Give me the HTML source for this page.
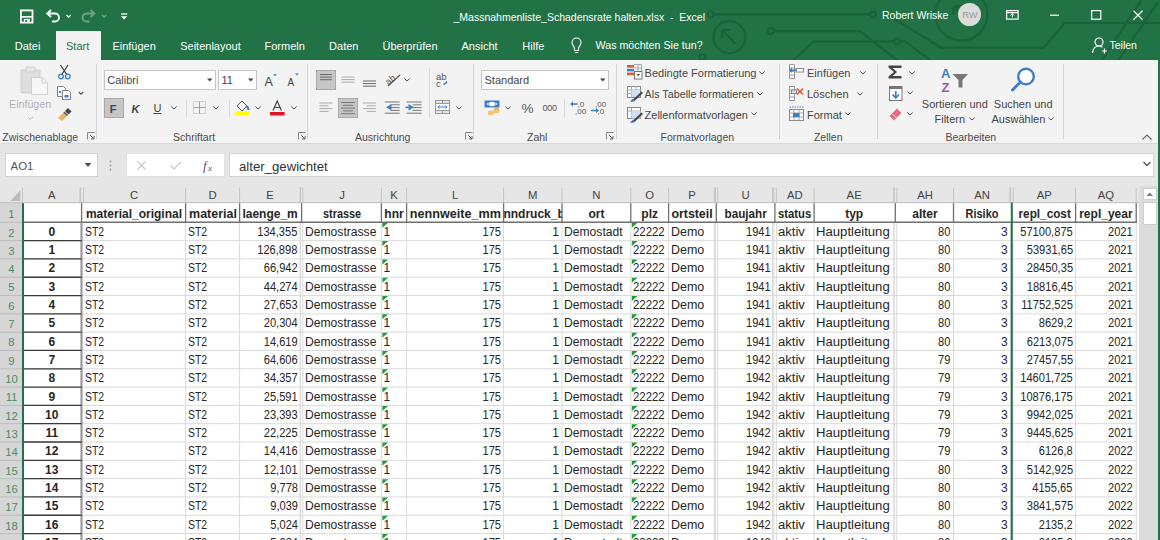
<!DOCTYPE html><html><head><meta charset="utf-8"><style>
*{margin:0;padding:0;box-sizing:border-box}
html,body{width:1160px;height:540px;overflow:hidden;background:#fff;font-family:"Liberation Sans",sans-serif}
.a{position:absolute}
.t{position:absolute;white-space:nowrap;line-height:1}
.ui{font-size:11px;color:#262626}
.cell{position:absolute;font-size:12px;color:#000;white-space:nowrap;line-height:18px;overflow:hidden}
.hl{position:absolute;background:#d4d4d4}
svg{position:absolute;overflow:visible}
</style></head><body>

<div class="a" style="left:0;top:0;width:1160px;height:59.5px;background:#217346"></div>
<svg class="a" style="left:0;top:0" width="1160" height="60" viewBox="0 0 1160 60">
<g fill="none" stroke="#1b633a" stroke-width="2.3">
<path d="M713.7 14.5 H870"/><circle cx="710.7" cy="14.5" r="3"/><circle cx="873" cy="14.5" r="3"/>
<circle cx="729.3" cy="37.2" r="16"/><path d="M735.5 43.5 L722.5 30.5 M722 30 V38 M722 30 H730" stroke-width="2.4"/>
<circle cx="770.7" cy="31" r="3"/><path d="M773.7 31 H859.7 L897 60"/>
<path d="M793.5 60 L814 41.4 H894"/><circle cx="897" cy="41.4" r="3"/><path d="M900 41.4 H905 L930 60"/>
<path d="M885 13 L940.7 47.6 H1044 L1064.8 22.8 H1160"/>
<circle cx="961.4" cy="14.5" r="26"/><path d="M968 21 L954 7 M953.5 6.5 V15 M953.5 6.5 H962" stroke-width="2.4"/>
<path d="M1102 60 L1141.4 0 M1118.6 60 L1158 2"/>
<circle cx="702.4" cy="57" r="3"/>
</g></svg>
<svg style="left:0;top:0" width="140" height="32">
<g fill="none" stroke="#fff" stroke-width="1.6">
<rect x="20.9" y="10.4" width="11.6" height="12.2" stroke-width="1.8"/>
<path d="M21 16.9 H32.5" stroke-width="1.6"/><rect x="23.8" y="18.9" width="6" height="3" fill="#fff" stroke="none"/><rect x="25.3" y="19.8" width="1.6" height="2.2" fill="#217346" stroke="none"/>
<path d="M48 13.5 H55 A4 4 0 0 1 55 21.5 H52" stroke-width="1.8"/><path d="M51 10 L47.2 13.5 L51 17" stroke-width="1.8"/>
<path d="M66.5 15 L68.6 17.2 L70.7 15" stroke-width="1.2"/>
<g opacity="0.35"><path d="M93.5 13.5 H86.5 A4 4 0 0 0 86.5 21.5 H89.5" stroke-width="1.8"/><path d="M90.5 10 L94.3 13.5 L90.5 17" stroke-width="1.8"/>
<path d="M102 15 L104.1 17.2 L106.2 15" stroke-width="1.2"/></g>
<path d="M121 14 H127.2" stroke-width="1.3"/>
</g><path d="M121 16.3 H127.2 L124.1 19.6 Z" fill="#fff"/>
</svg>
<div class="t" style="left:453.5px;top:11.8px;font-size:10.5px;color:#fff">_Massnahmenliste_Schadensrate halten.xlsx&nbsp; -&nbsp; Excel</div>
<div class="t" style="left:882px;top:10px;font-size:10.5px;color:#fff">Robert Wriske</div>
<div class="a" style="left:958.3px;top:3.1px;width:22.8px;height:22.8px;border-radius:50%;background:#dcdcdc"></div>
<div class="t" style="left:958.5px;top:10px;width:22.8px;text-align:center;font-size:9.5px;color:#9a9a9a;letter-spacing:-0.3px">RW</div>
<svg style="left:1000px;top:0" width="160" height="32"><g fill="none" stroke="#fff" stroke-width="1.2">
<rect x="6.6" y="10.6" width="11.5" height="8.5"/><path d="M6.6 12.6 H18.1"/>
<path d="M50 15.2 H59"/>
<rect x="91.6" y="10.6" width="9.2" height="8.6"/>
<path d="M133.5 10.8 L142.5 19.6 M142.5 10.8 L133.5 19.6"/>
</g><path d="M12.3 17.5 V13.8 M10.5 15.5 L12.3 13.6 L14.1 15.5" stroke="#fff" fill="none" stroke-width="1"/></svg>
<div class="a" style="left:56px;top:31.3px;width:44.8px;height:28.5px;background:#f3f3f3"></div>
<div class="t" style="left:14.7px;top:40.5px;font-size:11px;color:#fff">Datei</div>
<div class="t" style="left:66.0px;top:40.5px;font-size:11px;color:#217346">Start</div>
<div class="t" style="left:112.4px;top:40.5px;font-size:11px;color:#fff">Einfügen</div>
<div class="t" style="left:180.2px;top:40.5px;font-size:11px;color:#fff">Seitenlayout</div>
<div class="t" style="left:264.5px;top:40.5px;font-size:11px;color:#fff">Formeln</div>
<div class="t" style="left:329.1px;top:40.5px;font-size:11px;color:#fff">Daten</div>
<div class="t" style="left:382.5px;top:40.5px;font-size:11px;color:#fff">Überprüfen</div>
<div class="t" style="left:461.5px;top:40.5px;font-size:11px;color:#fff">Ansicht</div>
<div class="t" style="left:522.3px;top:40.5px;font-size:11px;color:#fff">Hilfe</div>
<svg style="left:568px;top:36px" width="20" height="20"><path d="M6.5 14.5 V12.5 C6.5 10.5 4 9.5 4 6.5 A4.5 4.5 0 0 1 13 6.5 C13 9.5 10.5 10.5 10.5 12.5 V14.5 Z M7 16.5 H10" fill="none" stroke="#fff" stroke-width="1.1"/></svg>
<div class="t" style="left:595.5px;top:40px;font-size:10.7px;color:#fff">Was möchten Sie tun?</div>
<svg style="left:1088px;top:34px" width="24" height="24"><g fill="none" stroke="#fff" stroke-width="1.2"><circle cx="11" cy="8" r="4"/><path d="M4.5 19 C5 14 8 12 11 12 C12.5 12 13.5 12.5 14.5 13.2"/><path d="M14 17 H19 M16.5 14.5 V19.5"/></g></svg>
<div class="t" style="left:1109.5px;top:40px;font-size:10.5px;color:#fff">Teilen</div>
<div class="a" style="left:0;top:59.5px;width:1160px;height:83.5px;background:#f3f3f3"></div>
<div class="a" style="left:0;top:143px;width:1160px;height:43px;background:#e6e6e6"></div>
<div class="a" style="left:0;top:142.6px;width:1158px;height:1.2px;background:#d9d9d9"></div>
<div class="a" style="left:1158px;top:59.5px;width:2px;height:481px;background:#217346"></div>
<div class="a" style="left:95.7px;top:64px;width:1px;height:75px;background:#d5d5d5"></div>
<div class="a" style="left:307.2px;top:64px;width:1px;height:75px;background:#d5d5d5"></div>
<div class="a" style="left:473.3px;top:64px;width:1px;height:75px;background:#d5d5d5"></div>
<div class="a" style="left:616.1px;top:64px;width:1px;height:75px;background:#d5d5d5"></div>
<div class="a" style="left:778.6px;top:64px;width:1px;height:75px;background:#d5d5d5"></div>
<div class="a" style="left:876.9px;top:64px;width:1px;height:75px;background:#d5d5d5"></div>
<div class="a" style="left:1063.3px;top:64px;width:1px;height:75px;background:#d5d5d5"></div>
<div class="t" style="left:2.3px;top:131.5px;font-size:10.5px;color:#4a4a4a">Zwischenablage</div>
<div class="t" style="left:173.1px;top:131.5px;font-size:10.5px;color:#4a4a4a">Schriftart</div>
<div class="t" style="left:355.0px;top:131.5px;font-size:10.5px;color:#4a4a4a">Ausrichtung</div>
<div class="t" style="left:527.0px;top:131.5px;font-size:10.5px;color:#4a4a4a">Zahl</div>
<div class="t" style="left:660.6px;top:131.5px;font-size:10.5px;color:#4a4a4a">Formatvorlagen</div>
<div class="t" style="left:813.9px;top:131.5px;font-size:10.5px;color:#4a4a4a">Zellen</div>
<div class="t" style="left:945.4px;top:131.5px;font-size:10.5px;color:#4a4a4a">Bearbeiten</div>
<svg style="left:18px;top:64px" width="34" height="34"><g>
<rect x="3" y="6" width="19" height="23" rx="1" fill="#dedede" stroke="#d0d0d0"/>
<rect x="8" y="3" width="9" height="5" rx="1" fill="#e8e8e8" stroke="#cfcfcf"/>
<path d="M13.5 13.5 H24 L29.5 19 V30.5 H13.5 Z" fill="#f7f7f7" stroke="#cfcfcf"/>
<path d="M24 13.5 V19 H29.5" fill="none" stroke="#cfcfcf"/>
</g></svg>
<div class="t" style="left:9px;top:99px;font-size:10.7px;color:#b3b3b3">Einfügen</div>
<svg style="left:26px;top:114.5px" width="10" height="8"><path d="M2 2 L4.5 4.5 L7 2" fill="none" stroke="#bdbdbd" stroke-width="1"/></svg>
<svg style="left:56px;top:63px" width="18" height="18"><g fill="none" stroke-width="1.3">
<path d="M4.5 2 L11 12 M12 2 L5.5 12" stroke="#444"/>
<circle cx="5" cy="13.5" r="2.3" stroke="#3d7fc6"/><circle cx="11.8" cy="13.5" r="2.3" stroke="#3d7fc6"/></g></svg>
<svg style="left:56px;top:85px" width="18" height="18"><g stroke="#808080" stroke-width="1">
<path d="M1.5 1.5 H7.5 L9.5 3.5 V11.5 H1.5 Z" fill="#fff"/>
<path d="M6.5 5.5 H12.5 L14.5 7.5 V14.5 H6.5 Z" fill="#fff"/></g>
<rect x="3" y="6" width="2" height="2" fill="#3d7fc6"/><rect x="8.5" y="10" width="4" height="2.5" fill="#3d7fc6"/></svg>
<svg style="left:77px;top:90px" width="10" height="8"><path d="M1.8 2 L4 4.2 L6.2 2" fill="none" stroke="#555" stroke-width="1.1"/></svg>
<svg style="left:56px;top:106px" width="18" height="16"><path d="M2 12 L8 6 L11.5 9.5 L6 15 Z" fill="#e7b75f"/><path d="M9 5 L12 2 L15.5 5.5 L12.5 8.5 Z" fill="#444"/><path d="M8 6 L11.5 9.5" stroke="#555" stroke-width="1.5"/></svg>
<svg style="left:86.5px;top:132px" width="9" height="9"><path d="M0.5 7.5 V0.5 H7.5" fill="none" stroke="#888" stroke-width="1"/><path d="M3 3 L7 7 M7 4 V7 H4" fill="none" stroke="#666" stroke-width="1"/></svg>
<svg style="left:297.5px;top:132px" width="9" height="9"><path d="M0.5 7.5 V0.5 H7.5" fill="none" stroke="#888" stroke-width="1"/><path d="M3 3 L7 7 M7 4 V7 H4" fill="none" stroke="#666" stroke-width="1"/></svg>
<svg style="left:464.5px;top:132px" width="9" height="9"><path d="M0.5 7.5 V0.5 H7.5" fill="none" stroke="#888" stroke-width="1"/><path d="M3 3 L7 7 M7 4 V7 H4" fill="none" stroke="#666" stroke-width="1"/></svg>
<svg style="left:605.5px;top:132px" width="9" height="9"><path d="M0.5 7.5 V0.5 H7.5" fill="none" stroke="#888" stroke-width="1"/><path d="M3 3 L7 7 M7 4 V7 H4" fill="none" stroke="#666" stroke-width="1"/></svg>
<div class="a" style="left:104.1px;top:70px;width:112px;height:20.2px;background:#fff;border:1px solid #c6c6c6"></div>
<div class="t" style="left:107.2px;top:75px;font-size:11px;color:#454545">Calibri</div>
<svg style="left:206px;top:76px" width="8" height="8"><path d="M1 2.5 H6.5 L3.75 5.5 Z" fill="#444"/></svg>
<div class="a" style="left:218.2px;top:70px;width:38.7px;height:20.2px;background:#fff;border:1px solid #c6c6c6"></div>
<div class="t" style="left:221.5px;top:75px;font-size:11px;color:#454545">11</div>
<svg style="left:246.5px;top:76px" width="8" height="8"><path d="M1 2.5 H6.5 L3.75 5.5 Z" fill="#444"/></svg>
<svg style="left:262px;top:72px" width="40" height="18"><text x="2.5" y="14" font-family="Liberation Sans" font-size="12.5" fill="#444">A</text><path d="M11 3.5 L13 1.5 L15 3.5 Z" fill="#3d7fc6"/>
<text x="25.5" y="14" font-family="Liberation Sans" font-size="10" fill="#444">A</text><path d="M33 1.5 L35 3.5 L37 1.5 Z" fill="#3d7fc6"/></svg>
<div class="a" style="left:104.1px;top:98px;width:19.8px;height:20.3px;background:#c6c6c6;border:1px solid #a9a9a9"></div>
<div class="t" style="left:109.8px;top:103.5px;font-size:11px;font-weight:bold;color:#444">F</div>
<div class="t" style="left:131.6px;top:103.5px;font-size:11px;font-weight:bold;font-style:italic;color:#444">K</div>
<div class="t" style="left:153.4px;top:102.5px;font-size:11px;color:#444;text-decoration:underline">U</div>
<svg style="left:170.2px;top:105px" width="8" height="6"><path d="M1.3 1.5 L4 4 L6.7 1.5" fill="none" stroke="#555" stroke-width="1"/></svg>
<div class="a" style="left:186px;top:100px;width:1px;height:17px;background:#d9d9d9"></div>
<svg style="left:193px;top:101px" width="14" height="14"><rect x="0.5" y="0.5" width="12" height="12" fill="none" stroke="#b0b0b0" stroke-dasharray="1 1"/><path d="M6.5 0.5 V12.5 M0.5 6.5 H12.5" stroke="#a0a0a0" stroke-width="1"/></svg>
<svg style="left:212.4px;top:105px" width="8" height="6"><path d="M1.3 1.5 L4 4 L6.7 1.5" fill="none" stroke="#555" stroke-width="1"/></svg>
<div class="a" style="left:228.5px;top:100px;width:1px;height:17px;background:#d9d9d9"></div>
<svg style="left:234px;top:98px" width="18" height="20"><path d="M3 8 L8 3 L13 8 L8 13 Z" fill="#fff" stroke="#555" stroke-width="1"/><path d="M12 8 C14 9 14.5 11 14.5 12" stroke="#3d7fc6" stroke-width="2" fill="none"/><rect x="0.8" y="13.5" width="14.5" height="3.6" fill="#ffff00"/></svg>
<svg style="left:254.39999999999998px;top:105px" width="8" height="6"><path d="M1.3 1.5 L4 4 L6.7 1.5" fill="none" stroke="#555" stroke-width="1"/></svg>
<svg style="left:269px;top:98px" width="18" height="20"><path d="M4 12.5 L8.2 3 L12.4 12.5 M5.6 9.5 H10.8" fill="none" stroke="#444" stroke-width="1.2"/><rect x="1" y="14" width="14.6" height="3.5" fill="#e81123"/></svg>
<svg style="left:289.7px;top:105px" width="8" height="6"><path d="M1.3 1.5 L4 4 L6.7 1.5" fill="none" stroke="#555" stroke-width="1"/></svg>
<div class="a" style="left:315.9px;top:69.5px;width:20px;height:20.8px;background:#c6c6c6;border:1px solid #a9a9a9"></div>
<div class="a" style="left:337.8px;top:97.7px;width:20.2px;height:20.4px;background:#c6c6c6;border:1px solid #a9a9a9"></div>
<svg style="left:0;top:0" width="1160" height="145"><rect x="320" y="74.0" width="12" height="1" fill="#666"/><rect x="320" y="76.6" width="12" height="1" fill="#666"/><rect x="320" y="79.2" width="12" height="1" fill="#666"/><rect x="341.5" y="76.5" width="13" height="1" fill="#aaa"/><rect x="341.5" y="79.1" width="13" height="1" fill="#aaa"/><rect x="341.5" y="81.7" width="13" height="1" fill="#aaa"/><rect x="363" y="80.5" width="13" height="1" fill="#666"/><rect x="363" y="83.1" width="13" height="1" fill="#666"/><rect x="363" y="85.7" width="13" height="1" fill="#666"/><rect x="319.5" y="102.5" width="13" height="1" fill="#aaa"/><rect x="319.5" y="105.3" width="9" height="1" fill="#aaa"/><rect x="319.5" y="108.1" width="13" height="1" fill="#aaa"/><rect x="319.5" y="110.9" width="9" height="1" fill="#aaa"/><rect x="341" y="102.0" width="14" height="1" fill="#777"/><rect x="343" y="104.8" width="10" height="1" fill="#777"/><rect x="341" y="107.6" width="14" height="1" fill="#777"/><rect x="343" y="110.4" width="10" height="1" fill="#777"/><rect x="341" y="113.2" width="14" height="1" fill="#777"/><rect x="362.9" y="102.5" width="13" height="1" fill="#aaa"/><rect x="366.9" y="105.3" width="9" height="1" fill="#aaa"/><rect x="362.9" y="108.1" width="13" height="1" fill="#aaa"/><rect x="366.9" y="110.9" width="9" height="1" fill="#aaa"/><rect x="384.7" y="101.5" width="15" height="1" fill="#777"/><rect x="390.7" y="104.3" width="9" height="1" fill="#777"/><rect x="390.7" y="107.1" width="9" height="1" fill="#777"/><rect x="390.7" y="109.9" width="9" height="1" fill="#777"/><rect x="384.7" y="112.7" width="15" height="1" fill="#777"/><rect x="406.6" y="101.5" width="15" height="1" fill="#777"/><rect x="412.6" y="104.3" width="9" height="1" fill="#777"/><rect x="412.6" y="107.1" width="9" height="1" fill="#777"/><rect x="412.6" y="109.9" width="9" height="1" fill="#777"/><rect x="406.6" y="112.7" width="15" height="1" fill="#777"/><path d="M386 107.3 L391.5 104 V110.5 Z M389 107.3 H390" fill="#3d7fc6"/><rect x="388" y="106.5" width="2.5" height="1.6" fill="#3d7fc6"/><path d="M414 107.3 L408.5 104 V110.5 Z" fill="#3d7fc6" transform="translate(0,0)"/><rect x="405.5" y="106.5" width="3" height="1.6" fill="#3d7fc6"/></svg>
<svg style="left:383px;top:70px" width="22" height="20"><text x="2" y="12" font-family="Liberation Sans" font-size="9" fill="#555" transform="rotate(-40 8 9)">ab</text><path d="M5 16 L17 5" stroke="#555" stroke-width="1.2"/></svg>
<svg style="left:403px;top:76.5px" width="8" height="6"><path d="M1.3 1.5 L4 4 L6.7 1.5" fill="none" stroke="#555" stroke-width="1"/></svg>
<div class="a" style="left:428.5px;top:68px;width:1px;height:50px;background:#d9d9d9"></div>
<svg style="left:434px;top:70px" width="20" height="20"><text x="2" y="9.5" font-family="Liberation Sans" font-size="9.5" fill="#555">ab</text><text x="2" y="16.5" font-family="Liberation Sans" font-size="9.5" fill="#555">c</text><path d="M9.5 14.5 L12 13 L13 11.5" stroke="#3d7fc6" stroke-width="1.5" fill="none"/></svg>
<svg style="left:434px;top:99px" width="18" height="17"><rect x="1.5" y="1.5" width="14" height="13" fill="#fff" stroke="#999"/><rect x="1.5" y="1.5" width="14" height="3" fill="#e4e4e4" stroke="#999"/><rect x="1.5" y="11.5" width="14" height="3" fill="#e4e4e4" stroke="#999"/><path d="M8.5 1.5 V4.5 M8.5 11.5 V14.5" stroke="#999"/><path d="M4 8 H13" stroke="#3d7fc6" stroke-width="1"/><path d="M4 8 L5.5 6.5 M4 8 L5.5 9.5 M13 8 L11.5 6.5 M13 8 L11.5 9.5" stroke="#3d7fc6" stroke-width="1"/></svg>
<svg style="left:454.7px;top:105px" width="8" height="6"><path d="M1.3 1.5 L4 4 L6.7 1.5" fill="none" stroke="#555" stroke-width="1"/></svg>
<div class="a" style="left:481.3px;top:70.2px;width:128px;height:20px;background:#fff;border:1px solid #c6c6c6"></div>
<div class="t" style="left:484.5px;top:75px;font-size:11px;color:#454545">Standard</div>
<svg style="left:599px;top:76px" width="8" height="8"><path d="M1 2.5 H6.5 L3.75 5.5 Z" fill="#444"/></svg>
<svg style="left:483px;top:99px" width="20" height="19"><rect x="1.5" y="1.5" width="15" height="7" fill="#3d7fc6"/><ellipse cx="9" cy="5" rx="3" ry="2.3" fill="#fff"/><path d="M3.5 5 L5.5 3.5 V6.5 Z M14.5 5 L12.5 3.5 V6.5 Z" fill="#fff"/>
<ellipse cx="8" cy="13" rx="3" ry="1.5" fill="#f0c27a"/><rect x="5" y="13" width="6" height="3" fill="#f0c27a"/><ellipse cx="13.5" cy="10.5" rx="2.8" ry="1.4" fill="#e9a94e"/><rect x="10.7" y="10.5" width="5.6" height="3.5" fill="#f0c27a"/></svg>
<svg style="left:504.3px;top:104.5px" width="8" height="6"><path d="M1.3 1.5 L4 4 L6.7 1.5" fill="none" stroke="#555" stroke-width="1"/></svg>
<div class="t" style="left:521.5px;top:102px;font-size:13.5px;color:#555">%</div>
<div class="t" style="left:542.4px;top:104px;font-size:9px;color:#555;letter-spacing:-0.2px">000</div>
<div class="a" style="left:563.5px;top:98.6px;width:1px;height:19px;background:#d9d9d9"></div>
<svg style="left:569px;top:100px" width="40" height="16"><g font-family="Liberation Sans" font-size="8" fill="#555"><text x="8.5" y="7">,0</text><text x="6" y="13.5">,00</text><text x="26" y="7">,00</text><text x="28.5" y="13.5">,0</text></g>
<path d="M1 4 L4 1.5 V6.5 Z" fill="#3d7fc6"/><rect x="3.5" y="3.3" width="5" height="1.5" fill="#3d7fc6"/>
<path d="M30 10.5 L27 8 V13 Z" fill="#3d7fc6"/><rect x="22" y="9.8" width="5.5" height="1.5" fill="#3d7fc6"/></svg>
<svg style="left:626px;top:63px" width="18" height="18"><rect x="1" y="2" width="7" height="2.6" fill="#e5563b"/><rect x="1" y="5.8" width="7" height="2.6" fill="#3d7fc6"/><rect x="1" y="9.6" width="7" height="2.6" fill="#e5563b"/>
<path d="M8 1.5 H15.5 M8 5 H15.5 M8 8.5 H9 M12 1.5 V8.5 M15.5 1.5 V8.5" stroke="#aaa" stroke-width="1" fill="none"/>
<rect x="8.5" y="8.5" width="7.5" height="7.5" fill="#fff" stroke="#777"/><path d="M10.5 11 H14 L12.25 13.5 Z" fill="#555"/></svg>
<svg style="left:626px;top:85px" width="18" height="18"><rect x="1.5" y="1.5" width="13" height="11" fill="#fff" stroke="#888"/><path d="M1.5 5 H14.5 M1.5 8.5 H14.5 M5.5 1.5 V12.5 M10 1.5 V12.5" stroke="#aaa"/><rect x="5.5" y="5" width="8" height="7" fill="#cfe0f4"/>
<path d="M6 15.5 L15.5 6.5 L17 8 L8 16.5 Z" fill="#444"/><path d="M4 16.5 L7 13.5 L9 15.5 L6 17 Z" fill="#3d7fc6"/></svg>
<svg style="left:626px;top:105.5px" width="18" height="18"><rect x="1.5" y="1.5" width="13" height="11" fill="#fff" stroke="#888"/><path d="M1.5 5 H14.5 M5.5 1.5 V12.5" stroke="#aaa"/><rect x="5.5" y="5" width="9" height="7.5" fill="#cfe0f4"/>
<path d="M6 15.5 L15.5 6.5 L17 8 L8 16.5 Z" fill="#444"/><path d="M4 16.5 L7 13.5 L9 15.5 L6 17 Z" fill="#3d7fc6"/></svg>
<div class="t" style="left:644.6px;top:67.5px;font-size:11px;color:#454545">Bedingte Formatierung</div>
<div class="t" style="left:644.6px;top:88.7px;font-size:10.75px;color:#454545">Als Tabelle formatieren</div>
<div class="t" style="left:644.6px;top:109.5px;font-size:11px;color:#454545">Zellenformatvorlagen</div>
<svg style="left:758.3px;top:70px" width="8" height="6"><path d="M1.3 1.5 L4 4 L6.7 1.5" fill="none" stroke="#555" stroke-width="1"/></svg>
<svg style="left:756.3px;top:90.5px" width="8" height="6"><path d="M1.3 1.5 L4 4 L6.7 1.5" fill="none" stroke="#555" stroke-width="1"/></svg>
<svg style="left:750.4px;top:111px" width="8" height="6"><path d="M1.3 1.5 L4 4 L6.7 1.5" fill="none" stroke="#555" stroke-width="1"/></svg>
<svg style="left:788px;top:63px" width="18" height="18"><path d="M1.5 1.5 H6.5 V15.5 H1.5 Z M1.5 5 H6.5 M1.5 8.5 H6.5 M1.5 12 H6.5" fill="#fff" stroke="#999"/><rect x="8" y="5.5" width="7.5" height="3.5" fill="#fff" stroke="#888"/><path d="M2 7.2 H9" stroke="#3d7fc6" stroke-width="1.5"/><path d="M1 7.2 L4 4.5 V10 Z" fill="#3d7fc6"/></svg>
<svg style="left:788px;top:85px" width="18" height="18"><path d="M1.5 1.5 H6.5 V15.5 H1.5 Z M1.5 5 H6.5 M1.5 8.5 H6.5 M1.5 12 H6.5" fill="#fff" stroke="#999"/><rect x="3.5" y="5" width="5" height="3.5" fill="#cfe0f4" stroke="#888"/><path d="M9 3.5 L15 9.5 M15 3.5 L9 9.5" stroke="#e5563b" stroke-width="1.6"/></svg>
<svg style="left:788px;top:105.5px" width="18" height="18"><rect x="1.5" y="3.5" width="14" height="11" fill="#fff" stroke="#888"/><path d="M1.5 7 H15.5 M1.5 11 H15.5 M6 3.5 V14.5 M11 3.5 V14.5" stroke="#aaa"/><rect x="5" y="7" width="6.5" height="4" fill="#3d7fc6"/><path d="M1.5 1 H15.5" stroke="#3d7fc6" stroke-dasharray="1.5 1" stroke-width="1"/></svg>
<div class="t" style="left:807px;top:67.5px;font-size:11px;color:#454545">Einfügen</div>
<div class="t" style="left:807px;top:88.7px;font-size:11px;color:#454545">Löschen</div>
<div class="t" style="left:807px;top:109.5px;font-size:11px;color:#454545">Format</div>
<svg style="left:858.5px;top:70px" width="8" height="6"><path d="M1.3 1.5 L4 4 L6.7 1.5" fill="none" stroke="#555" stroke-width="1"/></svg>
<svg style="left:855.7px;top:90.5px" width="8" height="6"><path d="M1.3 1.5 L4 4 L6.7 1.5" fill="none" stroke="#555" stroke-width="1"/></svg>
<svg style="left:843.9px;top:111px" width="8" height="6"><path d="M1.3 1.5 L4 4 L6.7 1.5" fill="none" stroke="#555" stroke-width="1"/></svg>
<svg style="left:886px;top:63px" width="18" height="18"><path d="M2.5 2.5 H15.5 V5 H6.5 L11 9 L6.5 13 H15.5 V15.5 H2.5 V13.5 L8 9 L2.5 4.5 Z" fill="#444"/></svg>
<svg style="left:907.7px;top:69.5px" width="8" height="6"><path d="M1.3 1.5 L4 4 L6.7 1.5" fill="none" stroke="#555" stroke-width="1"/></svg>
<svg style="left:888px;top:85px" width="16" height="17"><rect x="1.5" y="1.5" width="12.5" height="14" fill="#fff" stroke="#777"/><rect x="1.5" y="1.5" width="12.5" height="2.5" fill="#777"/><path d="M7.75 6 V12" stroke="#3d7fc6" stroke-width="1.8"/><path d="M4.5 9.5 L7.75 13 L11 9.5" fill="none" stroke="#3d7fc6" stroke-width="1.8"/></svg>
<svg style="left:906px;top:90px" width="8" height="6"><path d="M1.3 1.5 L4 4 L6.7 1.5" fill="none" stroke="#555" stroke-width="1"/></svg>
<svg style="left:888px;top:107px" width="16" height="14"><path d="M1.5 9 L9 1.5 L13.5 6 L6 13.5 Z" fill="#e46b83"/><path d="M4 6.5 L8.5 11" stroke="#fff" stroke-width="0.8"/></svg>
<svg style="left:906px;top:111.3px" width="8" height="6"><path d="M1.3 1.5 L4 4 L6.7 1.5" fill="none" stroke="#555" stroke-width="1"/></svg>
<svg style="left:940px;top:65px" width="32" height="30"><text x="1" y="13" font-family="Liberation Sans" font-size="13" font-weight="bold" fill="#3d7fc6">A</text><text x="1.5" y="26.5" font-family="Liberation Sans" font-size="13" font-weight="bold" fill="#9b58b5">Z</text>
<path d="M12.5 9 H28 L22.5 15 V22.5 H18.5 V15 Z" fill="#777"/></svg>
<div class="t" style="left:921.8px;top:99px;font-size:11px;color:#454545">Sortieren und</div>
<div class="t" style="left:934.5px;top:113.8px;font-size:11px;color:#454545">Filtern</div>
<svg style="left:968.2px;top:115.8px" width="8" height="6"><path d="M1.3 1.5 L4 4 L6.7 1.5" fill="none" stroke="#555" stroke-width="1"/></svg>
<svg style="left:1008px;top:64px" width="30" height="30"><circle cx="18" cy="12.5" r="7.8" fill="#fff" stroke="#3d7fc6" stroke-width="2.4"/><path d="M12.5 18 L4.5 26" stroke="#3d7fc6" stroke-width="3" stroke-linecap="round"/></svg>
<div class="t" style="left:993.8px;top:99px;font-size:11px;color:#454545">Suchen und</div>
<div class="t" style="left:991.5px;top:113.8px;font-size:11px;color:#454545">Auswählen</div>
<svg style="left:1047px;top:115.8px" width="8" height="6"><path d="M1.3 1.5 L4 4 L6.7 1.5" fill="none" stroke="#555" stroke-width="1"/></svg>
<div class="a" style="left:4.6px;top:153.2px;width:93px;height:23.4px;background:#fff;border:1px solid #d2d2d2"></div>
<div class="t" style="left:10.5px;top:160.5px;font-size:11.5px;color:#555">AO1</div>
<svg style="left:84px;top:160px" width="10" height="10"><path d="M0.5 3 H7.5 L4 7 Z" fill="#555"/></svg>
<svg style="left:108px;top:158px" width="6" height="16"><g fill="#9a9a9a"><circle cx="2.5" cy="3.5" r="0.9"/><circle cx="2.5" cy="7.5" r="0.9"/><circle cx="2.5" cy="11.5" r="0.9"/></g></svg>
<div class="a" style="left:125.5px;top:153.2px;width:99.3px;height:23.4px;background:#fff;border:1px solid #e2e2e2"></div>
<svg style="left:130px;top:155px" width="95" height="20"><g fill="none" stroke="#c8c8c8" stroke-width="1.1"><path d="M7.5 6.5 L15.5 14.5 M15.5 6.5 L7.5 14.5"/><path d="M40.5 10.5 L44 14 L51 7"/></g><text x="73" y="15" font-family="Liberation Serif" font-style="italic" font-size="13" fill="#555">f</text><text x="78" y="15.5" font-family="Liberation Serif" font-style="italic" font-size="9" fill="#555">x</text></svg>
<div class="a" style="left:228.7px;top:153.2px;width:925.5px;height:23.4px;background:#fff;border:1px solid #d6d6d6"></div>
<div class="t" style="left:239px;top:160px;font-size:13.2px;color:#333">alter_gewichtet</div>
<svg style="left:1140px;top:158px" width="14" height="12"><path d="M3.5 4 L7 7.5 L10.5 4" fill="none" stroke="#555" stroke-width="1.3"/></svg>
<svg style="left:1140px;top:130px" width="14" height="12"><path d="M2.5 9.5 L7 5 L11.5 9.5" fill="none" stroke="#666" stroke-width="1.1"/></svg>
<div class="a" style="left:0;top:186.0px;width:1139px;height:17.19999999999999px;background:#e6e6e6"></div>
<div class="a" style="left:0;top:203.2px;width:22px;height:336.8px;background:#d6d6d6"></div>
<div class="a" style="left:1139px;top:186.0px;width:19px;height:354.0px;background:#dcdcdc"></div>
<div class="a" style="left:1143px;top:188.3px;width:13.5px;height:12px;background:#fff;border:1px solid #cfcfcf"></div>
<svg style="left:1143px;top:188px" width="14" height="12"><path d="M3.5 8 H10 L6.75 4.5 Z" fill="#7a7a7a"/></svg>
<div class="a" style="left:1143px;top:202.2px;width:13.5px;height:22.6px;background:#fff;border:1px solid #cfcfcf"></div>
<svg style="left:0;top:0" width="1160" height="540"><path d="M10.4 201 L20.4 201 L20.4 190.2 Z" fill="#bcbcbc"/><line x1="22.5" y1="187.5" x2="22.5" y2="203.2" stroke="#c4c4c4" stroke-width="1"/><line x1="80.0" y1="187.5" x2="80.0" y2="203.2" stroke="#c4c4c4" stroke-width="1"/><line x1="80.6" y1="187.5" x2="80.6" y2="203.2" stroke="#c4c4c4" stroke-width="1"/><line x1="83.6" y1="187.5" x2="83.6" y2="203.2" stroke="#c4c4c4" stroke-width="1"/><line x1="185.6" y1="187.5" x2="185.6" y2="203.2" stroke="#c4c4c4" stroke-width="1"/><line x1="239.6" y1="187.5" x2="239.6" y2="203.2" stroke="#c4c4c4" stroke-width="1"/><line x1="300.1" y1="187.5" x2="300.1" y2="203.2" stroke="#c4c4c4" stroke-width="1"/><line x1="300.6" y1="187.5" x2="300.6" y2="203.2" stroke="#c4c4c4" stroke-width="1"/><line x1="302.8" y1="187.5" x2="302.8" y2="203.2" stroke="#c4c4c4" stroke-width="1"/><line x1="381.4" y1="187.5" x2="381.4" y2="203.2" stroke="#c4c4c4" stroke-width="1"/><line x1="406.6" y1="187.5" x2="406.6" y2="203.2" stroke="#c4c4c4" stroke-width="1"/><line x1="503.6" y1="187.5" x2="503.6" y2="203.2" stroke="#c4c4c4" stroke-width="1"/><line x1="562.0" y1="187.5" x2="562.0" y2="203.2" stroke="#c4c4c4" stroke-width="1"/><line x1="630.8" y1="187.5" x2="630.8" y2="203.2" stroke="#c4c4c4" stroke-width="1"/><line x1="668.6" y1="187.5" x2="668.6" y2="203.2" stroke="#c4c4c4" stroke-width="1"/><line x1="714.2" y1="187.5" x2="714.2" y2="203.2" stroke="#c4c4c4" stroke-width="1"/><line x1="715.5" y1="187.5" x2="715.5" y2="203.2" stroke="#c4c4c4" stroke-width="1"/><line x1="717.7" y1="187.5" x2="717.7" y2="203.2" stroke="#c4c4c4" stroke-width="1"/><line x1="772.5" y1="187.5" x2="772.5" y2="203.2" stroke="#c4c4c4" stroke-width="1"/><line x1="773.8" y1="187.5" x2="773.8" y2="203.2" stroke="#c4c4c4" stroke-width="1"/><line x1="776.4" y1="187.5" x2="776.4" y2="203.2" stroke="#c4c4c4" stroke-width="1"/><line x1="814.1" y1="187.5" x2="814.1" y2="203.2" stroke="#c4c4c4" stroke-width="1"/><line x1="893.8" y1="187.5" x2="893.8" y2="203.2" stroke="#c4c4c4" stroke-width="1"/><line x1="894.2" y1="187.5" x2="894.2" y2="203.2" stroke="#c4c4c4" stroke-width="1"/><line x1="896.9" y1="187.5" x2="896.9" y2="203.2" stroke="#c4c4c4" stroke-width="1"/><line x1="953.5" y1="187.5" x2="953.5" y2="203.2" stroke="#c4c4c4" stroke-width="1"/><line x1="1010.0" y1="187.5" x2="1010.0" y2="203.2" stroke="#c4c4c4" stroke-width="1"/><line x1="1010.6" y1="187.5" x2="1010.6" y2="203.2" stroke="#c4c4c4" stroke-width="1"/><line x1="1013.2" y1="187.5" x2="1013.2" y2="203.2" stroke="#c4c4c4" stroke-width="1"/><line x1="1075.6" y1="187.5" x2="1075.6" y2="203.2" stroke="#c4c4c4" stroke-width="1"/><line x1="1136.2" y1="187.5" x2="1136.2" y2="203.2" stroke="#c4c4c4" stroke-width="1"/><line x1="0" y1="202.7" x2="1139" y2="202.7" stroke="#bdbdbd" stroke-width="1"/><line x1="22" y1="222.3" x2="1137" y2="222.3" stroke="#dadada" stroke-width="1"/><line x1="0" y1="222.3" x2="22" y2="222.3" stroke="#bcbcbc" stroke-width="1"/><line x1="22" y1="240.61" x2="1137" y2="240.61" stroke="#dadada" stroke-width="1"/><line x1="0" y1="240.61" x2="22" y2="240.61" stroke="#bcbcbc" stroke-width="1"/><line x1="22" y1="258.92" x2="1137" y2="258.92" stroke="#dadada" stroke-width="1"/><line x1="0" y1="258.92" x2="22" y2="258.92" stroke="#bcbcbc" stroke-width="1"/><line x1="22" y1="277.23" x2="1137" y2="277.23" stroke="#dadada" stroke-width="1"/><line x1="0" y1="277.23" x2="22" y2="277.23" stroke="#bcbcbc" stroke-width="1"/><line x1="22" y1="295.54" x2="1137" y2="295.54" stroke="#dadada" stroke-width="1"/><line x1="0" y1="295.54" x2="22" y2="295.54" stroke="#bcbcbc" stroke-width="1"/><line x1="22" y1="313.85" x2="1137" y2="313.85" stroke="#dadada" stroke-width="1"/><line x1="0" y1="313.85" x2="22" y2="313.85" stroke="#bcbcbc" stroke-width="1"/><line x1="22" y1="332.15999999999997" x2="1137" y2="332.15999999999997" stroke="#dadada" stroke-width="1"/><line x1="0" y1="332.15999999999997" x2="22" y2="332.15999999999997" stroke="#bcbcbc" stroke-width="1"/><line x1="22" y1="350.47" x2="1137" y2="350.47" stroke="#dadada" stroke-width="1"/><line x1="0" y1="350.47" x2="22" y2="350.47" stroke="#bcbcbc" stroke-width="1"/><line x1="22" y1="368.78" x2="1137" y2="368.78" stroke="#dadada" stroke-width="1"/><line x1="0" y1="368.78" x2="22" y2="368.78" stroke="#bcbcbc" stroke-width="1"/><line x1="22" y1="387.09000000000003" x2="1137" y2="387.09000000000003" stroke="#dadada" stroke-width="1"/><line x1="0" y1="387.09000000000003" x2="22" y2="387.09000000000003" stroke="#bcbcbc" stroke-width="1"/><line x1="22" y1="405.4" x2="1137" y2="405.4" stroke="#dadada" stroke-width="1"/><line x1="0" y1="405.4" x2="22" y2="405.4" stroke="#bcbcbc" stroke-width="1"/><line x1="22" y1="423.71000000000004" x2="1137" y2="423.71000000000004" stroke="#dadada" stroke-width="1"/><line x1="0" y1="423.71000000000004" x2="22" y2="423.71000000000004" stroke="#bcbcbc" stroke-width="1"/><line x1="22" y1="442.02" x2="1137" y2="442.02" stroke="#dadada" stroke-width="1"/><line x1="0" y1="442.02" x2="22" y2="442.02" stroke="#bcbcbc" stroke-width="1"/><line x1="22" y1="460.33" x2="1137" y2="460.33" stroke="#dadada" stroke-width="1"/><line x1="0" y1="460.33" x2="22" y2="460.33" stroke="#bcbcbc" stroke-width="1"/><line x1="22" y1="478.64" x2="1137" y2="478.64" stroke="#dadada" stroke-width="1"/><line x1="0" y1="478.64" x2="22" y2="478.64" stroke="#bcbcbc" stroke-width="1"/><line x1="22" y1="496.95" x2="1137" y2="496.95" stroke="#dadada" stroke-width="1"/><line x1="0" y1="496.95" x2="22" y2="496.95" stroke="#bcbcbc" stroke-width="1"/><line x1="22" y1="515.26" x2="1137" y2="515.26" stroke="#dadada" stroke-width="1"/><line x1="0" y1="515.26" x2="22" y2="515.26" stroke="#bcbcbc" stroke-width="1"/><line x1="22" y1="533.5699999999999" x2="1137" y2="533.5699999999999" stroke="#dadada" stroke-width="1"/><line x1="0" y1="533.5699999999999" x2="22" y2="533.5699999999999" stroke="#bcbcbc" stroke-width="1"/><line x1="22" y1="551.88" x2="1137" y2="551.88" stroke="#dadada" stroke-width="1"/><line x1="0" y1="551.88" x2="22" y2="551.88" stroke="#bcbcbc" stroke-width="1"/><line x1="80.6" y1="222.3" x2="80.6" y2="540" stroke="#dadada" stroke-width="1"/><line x1="185.6" y1="222.3" x2="185.6" y2="540" stroke="#dadada" stroke-width="1"/><line x1="239.6" y1="222.3" x2="239.6" y2="540" stroke="#dadada" stroke-width="1"/><line x1="300.6" y1="222.3" x2="300.6" y2="540" stroke="#dadada" stroke-width="1"/><line x1="381.4" y1="222.3" x2="381.4" y2="540" stroke="#dadada" stroke-width="1"/><line x1="406.6" y1="222.3" x2="406.6" y2="540" stroke="#dadada" stroke-width="1"/><line x1="503.6" y1="222.3" x2="503.6" y2="540" stroke="#dadada" stroke-width="1"/><line x1="562.0" y1="222.3" x2="562.0" y2="540" stroke="#dadada" stroke-width="1"/><line x1="630.8" y1="222.3" x2="630.8" y2="540" stroke="#dadada" stroke-width="1"/><line x1="668.6" y1="222.3" x2="668.6" y2="540" stroke="#dadada" stroke-width="1"/><line x1="715.5" y1="222.3" x2="715.5" y2="540" stroke="#dadada" stroke-width="1"/><line x1="773.8" y1="222.3" x2="773.8" y2="540" stroke="#dadada" stroke-width="1"/><line x1="814.1" y1="222.3" x2="814.1" y2="540" stroke="#dadada" stroke-width="1"/><line x1="894.2" y1="222.3" x2="894.2" y2="540" stroke="#dadada" stroke-width="1"/><line x1="953.5" y1="222.3" x2="953.5" y2="540" stroke="#dadada" stroke-width="1"/><line x1="1010.6" y1="222.3" x2="1010.6" y2="540" stroke="#dadada" stroke-width="1"/><line x1="1075.6" y1="222.3" x2="1075.6" y2="540" stroke="#dadada" stroke-width="1"/><line x1="1136.2" y1="222.3" x2="1136.2" y2="540" stroke="#dadada" stroke-width="1"/><line x1="300.1" y1="222.3" x2="300.1" y2="540" stroke="#dadada" stroke-width="1"/><line x1="302.8" y1="222.3" x2="302.8" y2="540" stroke="#dadada" stroke-width="1"/><line x1="714.2" y1="222.3" x2="714.2" y2="540" stroke="#dadada" stroke-width="1"/><line x1="717.7" y1="222.3" x2="717.7" y2="540" stroke="#dadada" stroke-width="1"/><line x1="772.5" y1="222.3" x2="772.5" y2="540" stroke="#dadada" stroke-width="1"/><line x1="776.4" y1="222.3" x2="776.4" y2="540" stroke="#dadada" stroke-width="1"/><line x1="893.8" y1="222.3" x2="893.8" y2="540" stroke="#dadada" stroke-width="1"/><line x1="896.9" y1="222.3" x2="896.9" y2="540" stroke="#dadada" stroke-width="1"/><line x1="81.6" y1="203.2" x2="81.6" y2="222.3" stroke="#6f6f6f" stroke-width="1.3"/><line x1="185.6" y1="203.2" x2="185.6" y2="222.3" stroke="#6f6f6f" stroke-width="1.3"/><line x1="239.6" y1="203.2" x2="239.6" y2="222.3" stroke="#6f6f6f" stroke-width="1.3"/><line x1="301.6" y1="203.2" x2="301.6" y2="222.3" stroke="#6f6f6f" stroke-width="1.3"/><line x1="381.4" y1="203.2" x2="381.4" y2="222.3" stroke="#6f6f6f" stroke-width="1.3"/><line x1="406.6" y1="203.2" x2="406.6" y2="222.3" stroke="#6f6f6f" stroke-width="1.3"/><line x1="503.6" y1="203.2" x2="503.6" y2="222.3" stroke="#6f6f6f" stroke-width="1.3"/><line x1="562.0" y1="203.2" x2="562.0" y2="222.3" stroke="#6f6f6f" stroke-width="1.3"/><line x1="630.8" y1="203.2" x2="630.8" y2="222.3" stroke="#6f6f6f" stroke-width="1.3"/><line x1="668.6" y1="203.2" x2="668.6" y2="222.3" stroke="#6f6f6f" stroke-width="1.3"/><line x1="716.3" y1="203.2" x2="716.3" y2="222.3" stroke="#6f6f6f" stroke-width="1.3"/><line x1="774.9" y1="203.2" x2="774.9" y2="222.3" stroke="#6f6f6f" stroke-width="1.3"/><line x1="814.1" y1="203.2" x2="814.1" y2="222.3" stroke="#6f6f6f" stroke-width="1.3"/><line x1="895.3" y1="203.2" x2="895.3" y2="222.3" stroke="#6f6f6f" stroke-width="1.3"/><line x1="953.5" y1="203.2" x2="953.5" y2="222.3" stroke="#6f6f6f" stroke-width="1.3"/><line x1="1075.6" y1="203.2" x2="1075.6" y2="222.3" stroke="#6f6f6f" stroke-width="1.3"/><line x1="1136.2" y1="203.2" x2="1136.2" y2="222.3" stroke="#6f6f6f" stroke-width="1.3"/><line x1="22" y1="222.3" x2="1137" y2="222.3" stroke="#707070" stroke-width="1.6"/><line x1="81.6" y1="222.3" x2="81.6" y2="540" stroke="#9a9a9a" stroke-width="2"/><line x1="22" y1="240.61" x2="81.6" y2="240.61" stroke="#3a3a3a" stroke-width="1.3"/><line x1="22" y1="258.92" x2="81.6" y2="258.92" stroke="#3a3a3a" stroke-width="1.3"/><line x1="22" y1="277.23" x2="81.6" y2="277.23" stroke="#3a3a3a" stroke-width="1.3"/><line x1="22" y1="295.54" x2="81.6" y2="295.54" stroke="#3a3a3a" stroke-width="1.3"/><line x1="22" y1="313.85" x2="81.6" y2="313.85" stroke="#3a3a3a" stroke-width="1.3"/><line x1="22" y1="332.15999999999997" x2="81.6" y2="332.15999999999997" stroke="#3a3a3a" stroke-width="1.3"/><line x1="22" y1="350.47" x2="81.6" y2="350.47" stroke="#3a3a3a" stroke-width="1.3"/><line x1="22" y1="368.78" x2="81.6" y2="368.78" stroke="#3a3a3a" stroke-width="1.3"/><line x1="22" y1="387.09000000000003" x2="81.6" y2="387.09000000000003" stroke="#3a3a3a" stroke-width="1.3"/><line x1="22" y1="405.4" x2="81.6" y2="405.4" stroke="#3a3a3a" stroke-width="1.3"/><line x1="22" y1="423.71000000000004" x2="81.6" y2="423.71000000000004" stroke="#3a3a3a" stroke-width="1.3"/><line x1="22" y1="442.02" x2="81.6" y2="442.02" stroke="#3a3a3a" stroke-width="1.3"/><line x1="22" y1="460.33" x2="81.6" y2="460.33" stroke="#3a3a3a" stroke-width="1.3"/><line x1="22" y1="478.64" x2="81.6" y2="478.64" stroke="#3a3a3a" stroke-width="1.3"/><line x1="22" y1="496.95" x2="81.6" y2="496.95" stroke="#3a3a3a" stroke-width="1.3"/><line x1="22" y1="515.26" x2="81.6" y2="515.26" stroke="#3a3a3a" stroke-width="1.3"/><line x1="22" y1="533.5699999999999" x2="81.6" y2="533.5699999999999" stroke="#3a3a3a" stroke-width="1.3"/><line x1="22" y1="551.88" x2="81.6" y2="551.88" stroke="#3a3a3a" stroke-width="1.3"/><rect x="22" y="203.2" width="2" height="336.8" fill="#217346"/><rect x="1010.8" y="202.7" width="2" height="337.3" fill="#217346"/><path d="M382.40000000000003 222.8 L388.1 222.8 L382.40000000000003 227.8 Z" fill="#1f9d3a"/><path d="M631.8 222.8 L637.5 222.8 L631.8 227.8 Z" fill="#1f9d3a"/><path d="M382.40000000000003 241.11 L388.1 241.11 L382.40000000000003 246.11 Z" fill="#1f9d3a"/><path d="M631.8 241.11 L637.5 241.11 L631.8 246.11 Z" fill="#1f9d3a"/><path d="M382.40000000000003 259.42 L388.1 259.42 L382.40000000000003 264.42 Z" fill="#1f9d3a"/><path d="M631.8 259.42 L637.5 259.42 L631.8 264.42 Z" fill="#1f9d3a"/><path d="M382.40000000000003 277.73 L388.1 277.73 L382.40000000000003 282.73 Z" fill="#1f9d3a"/><path d="M631.8 277.73 L637.5 277.73 L631.8 282.73 Z" fill="#1f9d3a"/><path d="M382.40000000000003 296.04 L388.1 296.04 L382.40000000000003 301.04 Z" fill="#1f9d3a"/><path d="M631.8 296.04 L637.5 296.04 L631.8 301.04 Z" fill="#1f9d3a"/><path d="M382.40000000000003 314.35 L388.1 314.35 L382.40000000000003 319.35 Z" fill="#1f9d3a"/><path d="M631.8 314.35 L637.5 314.35 L631.8 319.35 Z" fill="#1f9d3a"/><path d="M382.40000000000003 332.65999999999997 L388.1 332.65999999999997 L382.40000000000003 337.65999999999997 Z" fill="#1f9d3a"/><path d="M631.8 332.65999999999997 L637.5 332.65999999999997 L631.8 337.65999999999997 Z" fill="#1f9d3a"/><path d="M382.40000000000003 350.97 L388.1 350.97 L382.40000000000003 355.97 Z" fill="#1f9d3a"/><path d="M631.8 350.97 L637.5 350.97 L631.8 355.97 Z" fill="#1f9d3a"/><path d="M382.40000000000003 369.28 L388.1 369.28 L382.40000000000003 374.28 Z" fill="#1f9d3a"/><path d="M631.8 369.28 L637.5 369.28 L631.8 374.28 Z" fill="#1f9d3a"/><path d="M382.40000000000003 387.59000000000003 L388.1 387.59000000000003 L382.40000000000003 392.59000000000003 Z" fill="#1f9d3a"/><path d="M631.8 387.59000000000003 L637.5 387.59000000000003 L631.8 392.59000000000003 Z" fill="#1f9d3a"/><path d="M382.40000000000003 405.9 L388.1 405.9 L382.40000000000003 410.9 Z" fill="#1f9d3a"/><path d="M631.8 405.9 L637.5 405.9 L631.8 410.9 Z" fill="#1f9d3a"/><path d="M382.40000000000003 424.21000000000004 L388.1 424.21000000000004 L382.40000000000003 429.21000000000004 Z" fill="#1f9d3a"/><path d="M631.8 424.21000000000004 L637.5 424.21000000000004 L631.8 429.21000000000004 Z" fill="#1f9d3a"/><path d="M382.40000000000003 442.52 L388.1 442.52 L382.40000000000003 447.52 Z" fill="#1f9d3a"/><path d="M631.8 442.52 L637.5 442.52 L631.8 447.52 Z" fill="#1f9d3a"/><path d="M382.40000000000003 460.83 L388.1 460.83 L382.40000000000003 465.83 Z" fill="#1f9d3a"/><path d="M631.8 460.83 L637.5 460.83 L631.8 465.83 Z" fill="#1f9d3a"/><path d="M382.40000000000003 479.14 L388.1 479.14 L382.40000000000003 484.14 Z" fill="#1f9d3a"/><path d="M631.8 479.14 L637.5 479.14 L631.8 484.14 Z" fill="#1f9d3a"/><path d="M382.40000000000003 497.45 L388.1 497.45 L382.40000000000003 502.45 Z" fill="#1f9d3a"/><path d="M631.8 497.45 L637.5 497.45 L631.8 502.45 Z" fill="#1f9d3a"/><path d="M382.40000000000003 515.76 L388.1 515.76 L382.40000000000003 520.76 Z" fill="#1f9d3a"/><path d="M631.8 515.76 L637.5 515.76 L631.8 520.76 Z" fill="#1f9d3a"/><path d="M382.40000000000003 534.0699999999999 L388.1 534.0699999999999 L382.40000000000003 539.0699999999999 Z" fill="#1f9d3a"/><path d="M631.8 534.0699999999999 L637.5 534.0699999999999 L631.8 539.0699999999999 Z" fill="#1f9d3a"/><path d="M382.40000000000003 552.38 L388.1 552.38 L382.40000000000003 557.38 Z" fill="#1f9d3a"/><path d="M631.8 552.38 L637.5 552.38 L631.8 557.38 Z" fill="#1f9d3a"/></svg>
<div class="t" style="left:23.0px;top:190.3px;width:57.599999999999994px;text-align:center;font-size:11.3px;color:#444">A</div>
<div class="t" style="left:82.4px;top:190.3px;width:103.19999999999999px;text-align:center;font-size:11.3px;color:#444">C</div>
<div class="t" style="left:185.6px;top:190.3px;width:54.0px;text-align:center;font-size:11.3px;color:#444">D</div>
<div class="t" style="left:239.6px;top:190.3px;width:61.00000000000003px;text-align:center;font-size:11.3px;color:#444">E</div>
<div class="t" style="left:302.8px;top:190.3px;width:78.59999999999997px;text-align:center;font-size:11.3px;color:#444">J</div>
<div class="t" style="left:381.4px;top:190.3px;width:25.200000000000045px;text-align:center;font-size:11.3px;color:#444">K</div>
<div class="t" style="left:406.6px;top:190.3px;width:97.0px;text-align:center;font-size:11.3px;color:#444">L</div>
<div class="t" style="left:503.6px;top:190.3px;width:58.39999999999998px;text-align:center;font-size:11.3px;color:#444">M</div>
<div class="t" style="left:562.0px;top:190.3px;width:68.79999999999995px;text-align:center;font-size:11.3px;color:#444">N</div>
<div class="t" style="left:630.8px;top:190.3px;width:37.80000000000007px;text-align:center;font-size:11.3px;color:#444">O</div>
<div class="t" style="left:668.6px;top:190.3px;width:46.89999999999998px;text-align:center;font-size:11.3px;color:#444">P</div>
<div class="t" style="left:717.6px;top:190.3px;width:56.19999999999993px;text-align:center;font-size:11.3px;color:#444">U</div>
<div class="t" style="left:775.6px;top:190.3px;width:38.5px;text-align:center;font-size:11.3px;color:#444">AD</div>
<div class="t" style="left:814.1px;top:190.3px;width:80.10000000000002px;text-align:center;font-size:11.3px;color:#444">AE</div>
<div class="t" style="left:896.6px;top:190.3px;width:56.89999999999998px;text-align:center;font-size:11.3px;color:#444">AH</div>
<div class="t" style="left:953.5px;top:190.3px;width:57.10000000000002px;text-align:center;font-size:11.3px;color:#444">AN</div>
<div class="t" style="left:1013.0px;top:190.3px;width:62.59999999999991px;text-align:center;font-size:11.3px;color:#444">AP</div>
<div class="t" style="left:1075.6px;top:190.3px;width:60.600000000000136px;text-align:center;font-size:11.3px;color:#444">AQ</div>
<div class="t" style="left:0;top:208.85px;width:23px;text-align:center;font-size:11.3px;color:#4f8a66">1</div>
<div class="t" style="left:0;top:227.555px;width:23px;text-align:center;font-size:11.3px;color:#4f8a66">2</div>
<div class="t" style="left:0;top:245.865px;width:23px;text-align:center;font-size:11.3px;color:#4f8a66">3</div>
<div class="t" style="left:0;top:264.175px;width:23px;text-align:center;font-size:11.3px;color:#4f8a66">4</div>
<div class="t" style="left:0;top:282.485px;width:23px;text-align:center;font-size:11.3px;color:#4f8a66">5</div>
<div class="t" style="left:0;top:300.795px;width:23px;text-align:center;font-size:11.3px;color:#4f8a66">6</div>
<div class="t" style="left:0;top:319.105px;width:23px;text-align:center;font-size:11.3px;color:#4f8a66">7</div>
<div class="t" style="left:0;top:337.41499999999996px;width:23px;text-align:center;font-size:11.3px;color:#4f8a66">8</div>
<div class="t" style="left:0;top:355.725px;width:23px;text-align:center;font-size:11.3px;color:#4f8a66">9</div>
<div class="t" style="left:0;top:374.03499999999997px;width:23px;text-align:center;font-size:11.3px;color:#4f8a66">10</div>
<div class="t" style="left:0;top:392.345px;width:23px;text-align:center;font-size:11.3px;color:#4f8a66">11</div>
<div class="t" style="left:0;top:410.655px;width:23px;text-align:center;font-size:11.3px;color:#4f8a66">12</div>
<div class="t" style="left:0;top:428.96500000000003px;width:23px;text-align:center;font-size:11.3px;color:#4f8a66">13</div>
<div class="t" style="left:0;top:447.275px;width:23px;text-align:center;font-size:11.3px;color:#4f8a66">14</div>
<div class="t" style="left:0;top:465.585px;width:23px;text-align:center;font-size:11.3px;color:#4f8a66">15</div>
<div class="t" style="left:0;top:483.895px;width:23px;text-align:center;font-size:11.3px;color:#4f8a66">16</div>
<div class="t" style="left:0;top:502.205px;width:23px;text-align:center;font-size:11.3px;color:#4f8a66">17</div>
<div class="t" style="left:0;top:520.515px;width:23px;text-align:center;font-size:11.3px;color:#4f8a66">18</div>
<div class="t" style="left:0;top:538.8249999999999px;width:23px;text-align:center;font-size:11.3px;color:#4f8a66">19</div>
<div class="t" style="left:0;top:557.135px;width:23px;text-align:center;font-size:11.3px;color:#4f8a66">20</div>
<div class="cell" style="left:82.4px;top:204.75px;width:103.19999999999999px;height:18px;display:flex;justify-content:center;font-weight:bold;color:#262626"><span style="">material_original</span></div>
<div class="cell" style="left:185.6px;top:204.75px;width:54.0px;height:18px;display:flex;justify-content:center;font-weight:bold;color:#262626"><span style="display:inline-block;transform:scaleX(1.04);transform-origin:center">material</span></div>
<div class="cell" style="left:239.6px;top:204.75px;width:61.00000000000003px;height:18px;display:flex;justify-content:center;font-weight:bold;color:#262626"><span style="">laenge_m</span></div>
<div class="cell" style="left:302.8px;top:204.75px;width:78.59999999999997px;height:18px;display:flex;justify-content:center;font-weight:bold;color:#262626"><span style="display:inline-block;transform:scaleX(0.9);transform-origin:center">strasse</span></div>
<div class="cell" style="left:381.4px;top:204.75px;width:25.200000000000045px;height:18px;display:flex;justify-content:center;font-weight:bold;color:#262626"><span style="">hnr</span></div>
<div class="cell" style="left:406.6px;top:204.75px;width:97.0px;height:18px;display:flex;justify-content:center;font-weight:bold;color:#262626"><span style="display:inline-block;transform:scaleX(1.05);transform-origin:center">nennweite_mm</span></div>
<div class="cell" style="left:503.6px;top:204.75px;width:58.39999999999998px;height:18px;display:flex;justify-content:center;font-weight:bold;color:#262626"><span style="">nenndruck_bar</span></div>
<div class="cell" style="left:562.0px;top:204.75px;width:68.79999999999995px;height:18px;display:flex;justify-content:center;font-weight:bold;color:#262626"><span style="">ort</span></div>
<div class="cell" style="left:630.8px;top:204.75px;width:37.80000000000007px;height:18px;display:flex;justify-content:center;font-weight:bold;color:#262626"><span style="">plz</span></div>
<div class="cell" style="left:668.6px;top:204.75px;width:46.89999999999998px;height:18px;display:flex;justify-content:center;font-weight:bold;color:#262626"><span style="display:inline-block;transform:scaleX(1.03);transform-origin:center">ortsteil</span></div>
<div class="cell" style="left:717.6px;top:204.75px;width:56.19999999999993px;height:18px;display:flex;justify-content:center;font-weight:bold;color:#262626"><span style="display:inline-block;transform:scaleX(0.975);transform-origin:center">baujahr</span></div>
<div class="cell" style="left:775.6px;top:204.75px;width:38.5px;height:18px;display:flex;justify-content:center;font-weight:bold;color:#262626"><span style="display:inline-block;transform:scaleX(0.94);transform-origin:center">status</span></div>
<div class="cell" style="left:814.1px;top:204.75px;width:80.10000000000002px;height:18px;display:flex;justify-content:center;font-weight:bold;color:#262626"><span style="">typ</span></div>
<div class="cell" style="left:896.6px;top:204.75px;width:56.89999999999998px;height:18px;display:flex;justify-content:center;font-weight:bold;color:#262626"><span style="">alter</span></div>
<div class="cell" style="left:953.5px;top:204.75px;width:57.10000000000002px;height:18px;display:flex;justify-content:center;font-weight:bold;color:#262626"><span style="display:inline-block;transform:scaleX(0.91);transform-origin:center">Risiko</span></div>
<div class="cell" style="left:1013.0px;top:204.75px;width:62.59999999999991px;height:18px;display:flex;justify-content:center;font-weight:bold;color:#262626"><span style="display:inline-block;transform:scaleX(0.98);transform-origin:center">repl_cost</span></div>
<div class="cell" style="left:1075.6px;top:204.75px;width:60.600000000000136px;height:18px;display:flex;justify-content:center;font-weight:bold;color:#262626"><span style="">repl_year</span></div>
<div class="cell" style="left:23.0px;top:222.75500000000002px;width:57.599999999999994px;height:18px;display:flex;justify-content:center;font-weight:bold;color:#262626"><span style="">0</span></div>
<div class="cell" style="left:82.4px;top:222.75500000000002px;width:103.19999999999999px;height:18px;padding:0 3px 0 2.2px;text-align:left;color:#262626"><span style="display:inline-block;transform:scaleX(0.87);transform-origin:left">ST2</span></div>
<div class="cell" style="left:185.6px;top:222.75500000000002px;width:54.0px;height:18px;padding:0 3px 0 2.2px;text-align:left;color:#262626"><span style="display:inline-block;transform:scaleX(0.87);transform-origin:left">ST2</span></div>
<div class="cell" style="left:239.6px;top:222.75500000000002px;width:61.00000000000003px;height:18px;padding:0 3px 0 2.3px;text-align:right;color:#262626"><span style="display:inline-block;transform:scaleX(0.925);transform-origin:right">134,355</span></div>
<div class="cell" style="left:302.8px;top:222.75500000000002px;width:78.59999999999997px;height:18px;padding:0 3px 0 2.2px;text-align:left;color:#262626"><span style="display:inline-block;transform:scaleX(1.01);transform-origin:left">Demostrasse</span></div>
<div class="cell" style="left:381.4px;top:222.75500000000002px;width:25.200000000000045px;height:18px;padding:0 3px 0 2.2px;text-align:left;color:#262626"><span style="">1</span></div>
<div class="cell" style="left:406.6px;top:222.75500000000002px;width:97.0px;height:18px;padding:0 3px 0 2.3px;text-align:right;color:#262626"><span style="display:inline-block;transform:scaleX(0.925);transform-origin:right">175</span></div>
<div class="cell" style="left:503.6px;top:222.75500000000002px;width:58.39999999999998px;height:18px;padding:0 3px 0 2.3px;text-align:right;color:#262626"><span style="">1</span></div>
<div class="cell" style="left:562.0px;top:222.75500000000002px;width:68.79999999999995px;height:18px;padding:0 3px 0 2.2px;text-align:left;color:#262626"><span style="display:inline-block;transform:scaleX(1.01);transform-origin:left">Demostadt</span></div>
<div class="cell" style="left:630.8px;top:222.75500000000002px;width:37.80000000000007px;height:18px;padding:0 3px 0 2.2px;text-align:left;color:#262626"><span style="display:inline-block;transform:scaleX(0.95);transform-origin:left">22222</span></div>
<div class="cell" style="left:668.6px;top:222.75500000000002px;width:46.89999999999998px;height:18px;padding:0 3px 0 2.2px;text-align:left;color:#262626"><span style="display:inline-block;transform:scaleX(1.04);transform-origin:left">Demo</span></div>
<div class="cell" style="left:717.6px;top:222.75500000000002px;width:56.19999999999993px;height:18px;padding:0 3px 0 2.3px;text-align:right;color:#262626"><span style="display:inline-block;transform:scaleX(0.925);transform-origin:right">1941</span></div>
<div class="cell" style="left:775.6px;top:222.75500000000002px;width:38.5px;height:18px;padding:0 3px 0 2.2px;text-align:left;color:#262626"><span style="display:inline-block;transform:scaleX(1.09);transform-origin:left">aktiv</span></div>
<div class="cell" style="left:814.1px;top:222.75500000000002px;width:80.10000000000002px;height:18px;padding:0 3px 0 2.2px;text-align:left;color:#262626"><span style="display:inline-block;transform:scaleX(1.094);transform-origin:left">Hauptleitung</span></div>
<div class="cell" style="left:896.6px;top:222.75500000000002px;width:56.89999999999998px;height:18px;padding:0 3px 0 2.3px;text-align:right;color:#262626"><span style="display:inline-block;transform:scaleX(0.925);transform-origin:right">80</span></div>
<div class="cell" style="left:953.5px;top:222.75500000000002px;width:57.10000000000002px;height:18px;padding:0 3px 0 2.3px;text-align:right;color:#262626"><span style="">3</span></div>
<div class="cell" style="left:1013.0px;top:222.75500000000002px;width:62.59999999999991px;height:18px;padding:0 3px 0 2.3px;text-align:right;color:#262626"><span style="display:inline-block;transform:scaleX(0.925);transform-origin:right">57100,875</span></div>
<div class="cell" style="left:1075.6px;top:222.75500000000002px;width:60.600000000000136px;height:18px;padding:0 3px 0 2.3px;text-align:right;color:#262626"><span style="display:inline-block;transform:scaleX(0.925);transform-origin:right">2021</span></div>
<div class="cell" style="left:23.0px;top:241.06500000000003px;width:57.599999999999994px;height:18px;display:flex;justify-content:center;font-weight:bold;color:#262626"><span style="">1</span></div>
<div class="cell" style="left:82.4px;top:241.06500000000003px;width:103.19999999999999px;height:18px;padding:0 3px 0 2.2px;text-align:left;color:#262626"><span style="display:inline-block;transform:scaleX(0.87);transform-origin:left">ST2</span></div>
<div class="cell" style="left:185.6px;top:241.06500000000003px;width:54.0px;height:18px;padding:0 3px 0 2.2px;text-align:left;color:#262626"><span style="display:inline-block;transform:scaleX(0.87);transform-origin:left">ST2</span></div>
<div class="cell" style="left:239.6px;top:241.06500000000003px;width:61.00000000000003px;height:18px;padding:0 3px 0 2.3px;text-align:right;color:#262626"><span style="display:inline-block;transform:scaleX(0.925);transform-origin:right">126,898</span></div>
<div class="cell" style="left:302.8px;top:241.06500000000003px;width:78.59999999999997px;height:18px;padding:0 3px 0 2.2px;text-align:left;color:#262626"><span style="display:inline-block;transform:scaleX(1.01);transform-origin:left">Demostrasse</span></div>
<div class="cell" style="left:381.4px;top:241.06500000000003px;width:25.200000000000045px;height:18px;padding:0 3px 0 2.2px;text-align:left;color:#262626"><span style="">1</span></div>
<div class="cell" style="left:406.6px;top:241.06500000000003px;width:97.0px;height:18px;padding:0 3px 0 2.3px;text-align:right;color:#262626"><span style="display:inline-block;transform:scaleX(0.925);transform-origin:right">175</span></div>
<div class="cell" style="left:503.6px;top:241.06500000000003px;width:58.39999999999998px;height:18px;padding:0 3px 0 2.3px;text-align:right;color:#262626"><span style="">1</span></div>
<div class="cell" style="left:562.0px;top:241.06500000000003px;width:68.79999999999995px;height:18px;padding:0 3px 0 2.2px;text-align:left;color:#262626"><span style="display:inline-block;transform:scaleX(1.01);transform-origin:left">Demostadt</span></div>
<div class="cell" style="left:630.8px;top:241.06500000000003px;width:37.80000000000007px;height:18px;padding:0 3px 0 2.2px;text-align:left;color:#262626"><span style="display:inline-block;transform:scaleX(0.95);transform-origin:left">22222</span></div>
<div class="cell" style="left:668.6px;top:241.06500000000003px;width:46.89999999999998px;height:18px;padding:0 3px 0 2.2px;text-align:left;color:#262626"><span style="display:inline-block;transform:scaleX(1.04);transform-origin:left">Demo</span></div>
<div class="cell" style="left:717.6px;top:241.06500000000003px;width:56.19999999999993px;height:18px;padding:0 3px 0 2.3px;text-align:right;color:#262626"><span style="display:inline-block;transform:scaleX(0.925);transform-origin:right">1941</span></div>
<div class="cell" style="left:775.6px;top:241.06500000000003px;width:38.5px;height:18px;padding:0 3px 0 2.2px;text-align:left;color:#262626"><span style="display:inline-block;transform:scaleX(1.09);transform-origin:left">aktiv</span></div>
<div class="cell" style="left:814.1px;top:241.06500000000003px;width:80.10000000000002px;height:18px;padding:0 3px 0 2.2px;text-align:left;color:#262626"><span style="display:inline-block;transform:scaleX(1.094);transform-origin:left">Hauptleitung</span></div>
<div class="cell" style="left:896.6px;top:241.06500000000003px;width:56.89999999999998px;height:18px;padding:0 3px 0 2.3px;text-align:right;color:#262626"><span style="display:inline-block;transform:scaleX(0.925);transform-origin:right">80</span></div>
<div class="cell" style="left:953.5px;top:241.06500000000003px;width:57.10000000000002px;height:18px;padding:0 3px 0 2.3px;text-align:right;color:#262626"><span style="">3</span></div>
<div class="cell" style="left:1013.0px;top:241.06500000000003px;width:62.59999999999991px;height:18px;padding:0 3px 0 2.3px;text-align:right;color:#262626"><span style="display:inline-block;transform:scaleX(0.925);transform-origin:right">53931,65</span></div>
<div class="cell" style="left:1075.6px;top:241.06500000000003px;width:60.600000000000136px;height:18px;padding:0 3px 0 2.3px;text-align:right;color:#262626"><span style="display:inline-block;transform:scaleX(0.925);transform-origin:right">2021</span></div>
<div class="cell" style="left:23.0px;top:259.375px;width:57.599999999999994px;height:18px;display:flex;justify-content:center;font-weight:bold;color:#262626"><span style="">2</span></div>
<div class="cell" style="left:82.4px;top:259.375px;width:103.19999999999999px;height:18px;padding:0 3px 0 2.2px;text-align:left;color:#262626"><span style="display:inline-block;transform:scaleX(0.87);transform-origin:left">ST2</span></div>
<div class="cell" style="left:185.6px;top:259.375px;width:54.0px;height:18px;padding:0 3px 0 2.2px;text-align:left;color:#262626"><span style="display:inline-block;transform:scaleX(0.87);transform-origin:left">ST2</span></div>
<div class="cell" style="left:239.6px;top:259.375px;width:61.00000000000003px;height:18px;padding:0 3px 0 2.3px;text-align:right;color:#262626"><span style="display:inline-block;transform:scaleX(0.925);transform-origin:right">66,942</span></div>
<div class="cell" style="left:302.8px;top:259.375px;width:78.59999999999997px;height:18px;padding:0 3px 0 2.2px;text-align:left;color:#262626"><span style="display:inline-block;transform:scaleX(1.01);transform-origin:left">Demostrasse</span></div>
<div class="cell" style="left:381.4px;top:259.375px;width:25.200000000000045px;height:18px;padding:0 3px 0 2.2px;text-align:left;color:#262626"><span style="">1</span></div>
<div class="cell" style="left:406.6px;top:259.375px;width:97.0px;height:18px;padding:0 3px 0 2.3px;text-align:right;color:#262626"><span style="display:inline-block;transform:scaleX(0.925);transform-origin:right">175</span></div>
<div class="cell" style="left:503.6px;top:259.375px;width:58.39999999999998px;height:18px;padding:0 3px 0 2.3px;text-align:right;color:#262626"><span style="">1</span></div>
<div class="cell" style="left:562.0px;top:259.375px;width:68.79999999999995px;height:18px;padding:0 3px 0 2.2px;text-align:left;color:#262626"><span style="display:inline-block;transform:scaleX(1.01);transform-origin:left">Demostadt</span></div>
<div class="cell" style="left:630.8px;top:259.375px;width:37.80000000000007px;height:18px;padding:0 3px 0 2.2px;text-align:left;color:#262626"><span style="display:inline-block;transform:scaleX(0.95);transform-origin:left">22222</span></div>
<div class="cell" style="left:668.6px;top:259.375px;width:46.89999999999998px;height:18px;padding:0 3px 0 2.2px;text-align:left;color:#262626"><span style="display:inline-block;transform:scaleX(1.04);transform-origin:left">Demo</span></div>
<div class="cell" style="left:717.6px;top:259.375px;width:56.19999999999993px;height:18px;padding:0 3px 0 2.3px;text-align:right;color:#262626"><span style="display:inline-block;transform:scaleX(0.925);transform-origin:right">1941</span></div>
<div class="cell" style="left:775.6px;top:259.375px;width:38.5px;height:18px;padding:0 3px 0 2.2px;text-align:left;color:#262626"><span style="display:inline-block;transform:scaleX(1.09);transform-origin:left">aktiv</span></div>
<div class="cell" style="left:814.1px;top:259.375px;width:80.10000000000002px;height:18px;padding:0 3px 0 2.2px;text-align:left;color:#262626"><span style="display:inline-block;transform:scaleX(1.094);transform-origin:left">Hauptleitung</span></div>
<div class="cell" style="left:896.6px;top:259.375px;width:56.89999999999998px;height:18px;padding:0 3px 0 2.3px;text-align:right;color:#262626"><span style="display:inline-block;transform:scaleX(0.925);transform-origin:right">80</span></div>
<div class="cell" style="left:953.5px;top:259.375px;width:57.10000000000002px;height:18px;padding:0 3px 0 2.3px;text-align:right;color:#262626"><span style="">3</span></div>
<div class="cell" style="left:1013.0px;top:259.375px;width:62.59999999999991px;height:18px;padding:0 3px 0 2.3px;text-align:right;color:#262626"><span style="display:inline-block;transform:scaleX(0.925);transform-origin:right">28450,35</span></div>
<div class="cell" style="left:1075.6px;top:259.375px;width:60.600000000000136px;height:18px;padding:0 3px 0 2.3px;text-align:right;color:#262626"><span style="display:inline-block;transform:scaleX(0.925);transform-origin:right">2021</span></div>
<div class="cell" style="left:23.0px;top:277.685px;width:57.599999999999994px;height:18px;display:flex;justify-content:center;font-weight:bold;color:#262626"><span style="">3</span></div>
<div class="cell" style="left:82.4px;top:277.685px;width:103.19999999999999px;height:18px;padding:0 3px 0 2.2px;text-align:left;color:#262626"><span style="display:inline-block;transform:scaleX(0.87);transform-origin:left">ST2</span></div>
<div class="cell" style="left:185.6px;top:277.685px;width:54.0px;height:18px;padding:0 3px 0 2.2px;text-align:left;color:#262626"><span style="display:inline-block;transform:scaleX(0.87);transform-origin:left">ST2</span></div>
<div class="cell" style="left:239.6px;top:277.685px;width:61.00000000000003px;height:18px;padding:0 3px 0 2.3px;text-align:right;color:#262626"><span style="display:inline-block;transform:scaleX(0.925);transform-origin:right">44,274</span></div>
<div class="cell" style="left:302.8px;top:277.685px;width:78.59999999999997px;height:18px;padding:0 3px 0 2.2px;text-align:left;color:#262626"><span style="display:inline-block;transform:scaleX(1.01);transform-origin:left">Demostrasse</span></div>
<div class="cell" style="left:381.4px;top:277.685px;width:25.200000000000045px;height:18px;padding:0 3px 0 2.2px;text-align:left;color:#262626"><span style="">1</span></div>
<div class="cell" style="left:406.6px;top:277.685px;width:97.0px;height:18px;padding:0 3px 0 2.3px;text-align:right;color:#262626"><span style="display:inline-block;transform:scaleX(0.925);transform-origin:right">175</span></div>
<div class="cell" style="left:503.6px;top:277.685px;width:58.39999999999998px;height:18px;padding:0 3px 0 2.3px;text-align:right;color:#262626"><span style="">1</span></div>
<div class="cell" style="left:562.0px;top:277.685px;width:68.79999999999995px;height:18px;padding:0 3px 0 2.2px;text-align:left;color:#262626"><span style="display:inline-block;transform:scaleX(1.01);transform-origin:left">Demostadt</span></div>
<div class="cell" style="left:630.8px;top:277.685px;width:37.80000000000007px;height:18px;padding:0 3px 0 2.2px;text-align:left;color:#262626"><span style="display:inline-block;transform:scaleX(0.95);transform-origin:left">22222</span></div>
<div class="cell" style="left:668.6px;top:277.685px;width:46.89999999999998px;height:18px;padding:0 3px 0 2.2px;text-align:left;color:#262626"><span style="display:inline-block;transform:scaleX(1.04);transform-origin:left">Demo</span></div>
<div class="cell" style="left:717.6px;top:277.685px;width:56.19999999999993px;height:18px;padding:0 3px 0 2.3px;text-align:right;color:#262626"><span style="display:inline-block;transform:scaleX(0.925);transform-origin:right">1941</span></div>
<div class="cell" style="left:775.6px;top:277.685px;width:38.5px;height:18px;padding:0 3px 0 2.2px;text-align:left;color:#262626"><span style="display:inline-block;transform:scaleX(1.09);transform-origin:left">aktiv</span></div>
<div class="cell" style="left:814.1px;top:277.685px;width:80.10000000000002px;height:18px;padding:0 3px 0 2.2px;text-align:left;color:#262626"><span style="display:inline-block;transform:scaleX(1.094);transform-origin:left">Hauptleitung</span></div>
<div class="cell" style="left:896.6px;top:277.685px;width:56.89999999999998px;height:18px;padding:0 3px 0 2.3px;text-align:right;color:#262626"><span style="display:inline-block;transform:scaleX(0.925);transform-origin:right">80</span></div>
<div class="cell" style="left:953.5px;top:277.685px;width:57.10000000000002px;height:18px;padding:0 3px 0 2.3px;text-align:right;color:#262626"><span style="">3</span></div>
<div class="cell" style="left:1013.0px;top:277.685px;width:62.59999999999991px;height:18px;padding:0 3px 0 2.3px;text-align:right;color:#262626"><span style="display:inline-block;transform:scaleX(0.925);transform-origin:right">18816,45</span></div>
<div class="cell" style="left:1075.6px;top:277.685px;width:60.600000000000136px;height:18px;padding:0 3px 0 2.3px;text-align:right;color:#262626"><span style="display:inline-block;transform:scaleX(0.925);transform-origin:right">2021</span></div>
<div class="cell" style="left:23.0px;top:295.995px;width:57.599999999999994px;height:18px;display:flex;justify-content:center;font-weight:bold;color:#262626"><span style="">4</span></div>
<div class="cell" style="left:82.4px;top:295.995px;width:103.19999999999999px;height:18px;padding:0 3px 0 2.2px;text-align:left;color:#262626"><span style="display:inline-block;transform:scaleX(0.87);transform-origin:left">ST2</span></div>
<div class="cell" style="left:185.6px;top:295.995px;width:54.0px;height:18px;padding:0 3px 0 2.2px;text-align:left;color:#262626"><span style="display:inline-block;transform:scaleX(0.87);transform-origin:left">ST2</span></div>
<div class="cell" style="left:239.6px;top:295.995px;width:61.00000000000003px;height:18px;padding:0 3px 0 2.3px;text-align:right;color:#262626"><span style="display:inline-block;transform:scaleX(0.925);transform-origin:right">27,653</span></div>
<div class="cell" style="left:302.8px;top:295.995px;width:78.59999999999997px;height:18px;padding:0 3px 0 2.2px;text-align:left;color:#262626"><span style="display:inline-block;transform:scaleX(1.01);transform-origin:left">Demostrasse</span></div>
<div class="cell" style="left:381.4px;top:295.995px;width:25.200000000000045px;height:18px;padding:0 3px 0 2.2px;text-align:left;color:#262626"><span style="">1</span></div>
<div class="cell" style="left:406.6px;top:295.995px;width:97.0px;height:18px;padding:0 3px 0 2.3px;text-align:right;color:#262626"><span style="display:inline-block;transform:scaleX(0.925);transform-origin:right">175</span></div>
<div class="cell" style="left:503.6px;top:295.995px;width:58.39999999999998px;height:18px;padding:0 3px 0 2.3px;text-align:right;color:#262626"><span style="">1</span></div>
<div class="cell" style="left:562.0px;top:295.995px;width:68.79999999999995px;height:18px;padding:0 3px 0 2.2px;text-align:left;color:#262626"><span style="display:inline-block;transform:scaleX(1.01);transform-origin:left">Demostadt</span></div>
<div class="cell" style="left:630.8px;top:295.995px;width:37.80000000000007px;height:18px;padding:0 3px 0 2.2px;text-align:left;color:#262626"><span style="display:inline-block;transform:scaleX(0.95);transform-origin:left">22222</span></div>
<div class="cell" style="left:668.6px;top:295.995px;width:46.89999999999998px;height:18px;padding:0 3px 0 2.2px;text-align:left;color:#262626"><span style="display:inline-block;transform:scaleX(1.04);transform-origin:left">Demo</span></div>
<div class="cell" style="left:717.6px;top:295.995px;width:56.19999999999993px;height:18px;padding:0 3px 0 2.3px;text-align:right;color:#262626"><span style="display:inline-block;transform:scaleX(0.925);transform-origin:right">1941</span></div>
<div class="cell" style="left:775.6px;top:295.995px;width:38.5px;height:18px;padding:0 3px 0 2.2px;text-align:left;color:#262626"><span style="display:inline-block;transform:scaleX(1.09);transform-origin:left">aktiv</span></div>
<div class="cell" style="left:814.1px;top:295.995px;width:80.10000000000002px;height:18px;padding:0 3px 0 2.2px;text-align:left;color:#262626"><span style="display:inline-block;transform:scaleX(1.094);transform-origin:left">Hauptleitung</span></div>
<div class="cell" style="left:896.6px;top:295.995px;width:56.89999999999998px;height:18px;padding:0 3px 0 2.3px;text-align:right;color:#262626"><span style="display:inline-block;transform:scaleX(0.925);transform-origin:right">80</span></div>
<div class="cell" style="left:953.5px;top:295.995px;width:57.10000000000002px;height:18px;padding:0 3px 0 2.3px;text-align:right;color:#262626"><span style="">3</span></div>
<div class="cell" style="left:1013.0px;top:295.995px;width:62.59999999999991px;height:18px;padding:0 3px 0 2.3px;text-align:right;color:#262626"><span style="display:inline-block;transform:scaleX(0.925);transform-origin:right">11752,525</span></div>
<div class="cell" style="left:1075.6px;top:295.995px;width:60.600000000000136px;height:18px;padding:0 3px 0 2.3px;text-align:right;color:#262626"><span style="display:inline-block;transform:scaleX(0.925);transform-origin:right">2021</span></div>
<div class="cell" style="left:23.0px;top:314.305px;width:57.599999999999994px;height:18px;display:flex;justify-content:center;font-weight:bold;color:#262626"><span style="">5</span></div>
<div class="cell" style="left:82.4px;top:314.305px;width:103.19999999999999px;height:18px;padding:0 3px 0 2.2px;text-align:left;color:#262626"><span style="display:inline-block;transform:scaleX(0.87);transform-origin:left">ST2</span></div>
<div class="cell" style="left:185.6px;top:314.305px;width:54.0px;height:18px;padding:0 3px 0 2.2px;text-align:left;color:#262626"><span style="display:inline-block;transform:scaleX(0.87);transform-origin:left">ST2</span></div>
<div class="cell" style="left:239.6px;top:314.305px;width:61.00000000000003px;height:18px;padding:0 3px 0 2.3px;text-align:right;color:#262626"><span style="display:inline-block;transform:scaleX(0.925);transform-origin:right">20,304</span></div>
<div class="cell" style="left:302.8px;top:314.305px;width:78.59999999999997px;height:18px;padding:0 3px 0 2.2px;text-align:left;color:#262626"><span style="display:inline-block;transform:scaleX(1.01);transform-origin:left">Demostrasse</span></div>
<div class="cell" style="left:381.4px;top:314.305px;width:25.200000000000045px;height:18px;padding:0 3px 0 2.2px;text-align:left;color:#262626"><span style="">1</span></div>
<div class="cell" style="left:406.6px;top:314.305px;width:97.0px;height:18px;padding:0 3px 0 2.3px;text-align:right;color:#262626"><span style="display:inline-block;transform:scaleX(0.925);transform-origin:right">175</span></div>
<div class="cell" style="left:503.6px;top:314.305px;width:58.39999999999998px;height:18px;padding:0 3px 0 2.3px;text-align:right;color:#262626"><span style="">1</span></div>
<div class="cell" style="left:562.0px;top:314.305px;width:68.79999999999995px;height:18px;padding:0 3px 0 2.2px;text-align:left;color:#262626"><span style="display:inline-block;transform:scaleX(1.01);transform-origin:left">Demostadt</span></div>
<div class="cell" style="left:630.8px;top:314.305px;width:37.80000000000007px;height:18px;padding:0 3px 0 2.2px;text-align:left;color:#262626"><span style="display:inline-block;transform:scaleX(0.95);transform-origin:left">22222</span></div>
<div class="cell" style="left:668.6px;top:314.305px;width:46.89999999999998px;height:18px;padding:0 3px 0 2.2px;text-align:left;color:#262626"><span style="display:inline-block;transform:scaleX(1.04);transform-origin:left">Demo</span></div>
<div class="cell" style="left:717.6px;top:314.305px;width:56.19999999999993px;height:18px;padding:0 3px 0 2.3px;text-align:right;color:#262626"><span style="display:inline-block;transform:scaleX(0.925);transform-origin:right">1941</span></div>
<div class="cell" style="left:775.6px;top:314.305px;width:38.5px;height:18px;padding:0 3px 0 2.2px;text-align:left;color:#262626"><span style="display:inline-block;transform:scaleX(1.09);transform-origin:left">aktiv</span></div>
<div class="cell" style="left:814.1px;top:314.305px;width:80.10000000000002px;height:18px;padding:0 3px 0 2.2px;text-align:left;color:#262626"><span style="display:inline-block;transform:scaleX(1.094);transform-origin:left">Hauptleitung</span></div>
<div class="cell" style="left:896.6px;top:314.305px;width:56.89999999999998px;height:18px;padding:0 3px 0 2.3px;text-align:right;color:#262626"><span style="display:inline-block;transform:scaleX(0.925);transform-origin:right">80</span></div>
<div class="cell" style="left:953.5px;top:314.305px;width:57.10000000000002px;height:18px;padding:0 3px 0 2.3px;text-align:right;color:#262626"><span style="">3</span></div>
<div class="cell" style="left:1013.0px;top:314.305px;width:62.59999999999991px;height:18px;padding:0 3px 0 2.3px;text-align:right;color:#262626"><span style="display:inline-block;transform:scaleX(0.925);transform-origin:right">8629,2</span></div>
<div class="cell" style="left:1075.6px;top:314.305px;width:60.600000000000136px;height:18px;padding:0 3px 0 2.3px;text-align:right;color:#262626"><span style="display:inline-block;transform:scaleX(0.925);transform-origin:right">2021</span></div>
<div class="cell" style="left:23.0px;top:332.61499999999995px;width:57.599999999999994px;height:18px;display:flex;justify-content:center;font-weight:bold;color:#262626"><span style="">6</span></div>
<div class="cell" style="left:82.4px;top:332.61499999999995px;width:103.19999999999999px;height:18px;padding:0 3px 0 2.2px;text-align:left;color:#262626"><span style="display:inline-block;transform:scaleX(0.87);transform-origin:left">ST2</span></div>
<div class="cell" style="left:185.6px;top:332.61499999999995px;width:54.0px;height:18px;padding:0 3px 0 2.2px;text-align:left;color:#262626"><span style="display:inline-block;transform:scaleX(0.87);transform-origin:left">ST2</span></div>
<div class="cell" style="left:239.6px;top:332.61499999999995px;width:61.00000000000003px;height:18px;padding:0 3px 0 2.3px;text-align:right;color:#262626"><span style="display:inline-block;transform:scaleX(0.925);transform-origin:right">14,619</span></div>
<div class="cell" style="left:302.8px;top:332.61499999999995px;width:78.59999999999997px;height:18px;padding:0 3px 0 2.2px;text-align:left;color:#262626"><span style="display:inline-block;transform:scaleX(1.01);transform-origin:left">Demostrasse</span></div>
<div class="cell" style="left:381.4px;top:332.61499999999995px;width:25.200000000000045px;height:18px;padding:0 3px 0 2.2px;text-align:left;color:#262626"><span style="">1</span></div>
<div class="cell" style="left:406.6px;top:332.61499999999995px;width:97.0px;height:18px;padding:0 3px 0 2.3px;text-align:right;color:#262626"><span style="display:inline-block;transform:scaleX(0.925);transform-origin:right">175</span></div>
<div class="cell" style="left:503.6px;top:332.61499999999995px;width:58.39999999999998px;height:18px;padding:0 3px 0 2.3px;text-align:right;color:#262626"><span style="">1</span></div>
<div class="cell" style="left:562.0px;top:332.61499999999995px;width:68.79999999999995px;height:18px;padding:0 3px 0 2.2px;text-align:left;color:#262626"><span style="display:inline-block;transform:scaleX(1.01);transform-origin:left">Demostadt</span></div>
<div class="cell" style="left:630.8px;top:332.61499999999995px;width:37.80000000000007px;height:18px;padding:0 3px 0 2.2px;text-align:left;color:#262626"><span style="display:inline-block;transform:scaleX(0.95);transform-origin:left">22222</span></div>
<div class="cell" style="left:668.6px;top:332.61499999999995px;width:46.89999999999998px;height:18px;padding:0 3px 0 2.2px;text-align:left;color:#262626"><span style="display:inline-block;transform:scaleX(1.04);transform-origin:left">Demo</span></div>
<div class="cell" style="left:717.6px;top:332.61499999999995px;width:56.19999999999993px;height:18px;padding:0 3px 0 2.3px;text-align:right;color:#262626"><span style="display:inline-block;transform:scaleX(0.925);transform-origin:right">1941</span></div>
<div class="cell" style="left:775.6px;top:332.61499999999995px;width:38.5px;height:18px;padding:0 3px 0 2.2px;text-align:left;color:#262626"><span style="display:inline-block;transform:scaleX(1.09);transform-origin:left">aktiv</span></div>
<div class="cell" style="left:814.1px;top:332.61499999999995px;width:80.10000000000002px;height:18px;padding:0 3px 0 2.2px;text-align:left;color:#262626"><span style="display:inline-block;transform:scaleX(1.094);transform-origin:left">Hauptleitung</span></div>
<div class="cell" style="left:896.6px;top:332.61499999999995px;width:56.89999999999998px;height:18px;padding:0 3px 0 2.3px;text-align:right;color:#262626"><span style="display:inline-block;transform:scaleX(0.925);transform-origin:right">80</span></div>
<div class="cell" style="left:953.5px;top:332.61499999999995px;width:57.10000000000002px;height:18px;padding:0 3px 0 2.3px;text-align:right;color:#262626"><span style="">3</span></div>
<div class="cell" style="left:1013.0px;top:332.61499999999995px;width:62.59999999999991px;height:18px;padding:0 3px 0 2.3px;text-align:right;color:#262626"><span style="display:inline-block;transform:scaleX(0.925);transform-origin:right">6213,075</span></div>
<div class="cell" style="left:1075.6px;top:332.61499999999995px;width:60.600000000000136px;height:18px;padding:0 3px 0 2.3px;text-align:right;color:#262626"><span style="display:inline-block;transform:scaleX(0.925);transform-origin:right">2021</span></div>
<div class="cell" style="left:23.0px;top:350.925px;width:57.599999999999994px;height:18px;display:flex;justify-content:center;font-weight:bold;color:#262626"><span style="">7</span></div>
<div class="cell" style="left:82.4px;top:350.925px;width:103.19999999999999px;height:18px;padding:0 3px 0 2.2px;text-align:left;color:#262626"><span style="display:inline-block;transform:scaleX(0.87);transform-origin:left">ST2</span></div>
<div class="cell" style="left:185.6px;top:350.925px;width:54.0px;height:18px;padding:0 3px 0 2.2px;text-align:left;color:#262626"><span style="display:inline-block;transform:scaleX(0.87);transform-origin:left">ST2</span></div>
<div class="cell" style="left:239.6px;top:350.925px;width:61.00000000000003px;height:18px;padding:0 3px 0 2.3px;text-align:right;color:#262626"><span style="display:inline-block;transform:scaleX(0.925);transform-origin:right">64,606</span></div>
<div class="cell" style="left:302.8px;top:350.925px;width:78.59999999999997px;height:18px;padding:0 3px 0 2.2px;text-align:left;color:#262626"><span style="display:inline-block;transform:scaleX(1.01);transform-origin:left">Demostrasse</span></div>
<div class="cell" style="left:381.4px;top:350.925px;width:25.200000000000045px;height:18px;padding:0 3px 0 2.2px;text-align:left;color:#262626"><span style="">1</span></div>
<div class="cell" style="left:406.6px;top:350.925px;width:97.0px;height:18px;padding:0 3px 0 2.3px;text-align:right;color:#262626"><span style="display:inline-block;transform:scaleX(0.925);transform-origin:right">175</span></div>
<div class="cell" style="left:503.6px;top:350.925px;width:58.39999999999998px;height:18px;padding:0 3px 0 2.3px;text-align:right;color:#262626"><span style="">1</span></div>
<div class="cell" style="left:562.0px;top:350.925px;width:68.79999999999995px;height:18px;padding:0 3px 0 2.2px;text-align:left;color:#262626"><span style="display:inline-block;transform:scaleX(1.01);transform-origin:left">Demostadt</span></div>
<div class="cell" style="left:630.8px;top:350.925px;width:37.80000000000007px;height:18px;padding:0 3px 0 2.2px;text-align:left;color:#262626"><span style="display:inline-block;transform:scaleX(0.95);transform-origin:left">22222</span></div>
<div class="cell" style="left:668.6px;top:350.925px;width:46.89999999999998px;height:18px;padding:0 3px 0 2.2px;text-align:left;color:#262626"><span style="display:inline-block;transform:scaleX(1.04);transform-origin:left">Demo</span></div>
<div class="cell" style="left:717.6px;top:350.925px;width:56.19999999999993px;height:18px;padding:0 3px 0 2.3px;text-align:right;color:#262626"><span style="display:inline-block;transform:scaleX(0.925);transform-origin:right">1942</span></div>
<div class="cell" style="left:775.6px;top:350.925px;width:38.5px;height:18px;padding:0 3px 0 2.2px;text-align:left;color:#262626"><span style="display:inline-block;transform:scaleX(1.09);transform-origin:left">aktiv</span></div>
<div class="cell" style="left:814.1px;top:350.925px;width:80.10000000000002px;height:18px;padding:0 3px 0 2.2px;text-align:left;color:#262626"><span style="display:inline-block;transform:scaleX(1.094);transform-origin:left">Hauptleitung</span></div>
<div class="cell" style="left:896.6px;top:350.925px;width:56.89999999999998px;height:18px;padding:0 3px 0 2.3px;text-align:right;color:#262626"><span style="display:inline-block;transform:scaleX(0.925);transform-origin:right">79</span></div>
<div class="cell" style="left:953.5px;top:350.925px;width:57.10000000000002px;height:18px;padding:0 3px 0 2.3px;text-align:right;color:#262626"><span style="">3</span></div>
<div class="cell" style="left:1013.0px;top:350.925px;width:62.59999999999991px;height:18px;padding:0 3px 0 2.3px;text-align:right;color:#262626"><span style="display:inline-block;transform:scaleX(0.925);transform-origin:right">27457,55</span></div>
<div class="cell" style="left:1075.6px;top:350.925px;width:60.600000000000136px;height:18px;padding:0 3px 0 2.3px;text-align:right;color:#262626"><span style="display:inline-block;transform:scaleX(0.925);transform-origin:right">2021</span></div>
<div class="cell" style="left:23.0px;top:369.23499999999996px;width:57.599999999999994px;height:18px;display:flex;justify-content:center;font-weight:bold;color:#262626"><span style="">8</span></div>
<div class="cell" style="left:82.4px;top:369.23499999999996px;width:103.19999999999999px;height:18px;padding:0 3px 0 2.2px;text-align:left;color:#262626"><span style="display:inline-block;transform:scaleX(0.87);transform-origin:left">ST2</span></div>
<div class="cell" style="left:185.6px;top:369.23499999999996px;width:54.0px;height:18px;padding:0 3px 0 2.2px;text-align:left;color:#262626"><span style="display:inline-block;transform:scaleX(0.87);transform-origin:left">ST2</span></div>
<div class="cell" style="left:239.6px;top:369.23499999999996px;width:61.00000000000003px;height:18px;padding:0 3px 0 2.3px;text-align:right;color:#262626"><span style="display:inline-block;transform:scaleX(0.925);transform-origin:right">34,357</span></div>
<div class="cell" style="left:302.8px;top:369.23499999999996px;width:78.59999999999997px;height:18px;padding:0 3px 0 2.2px;text-align:left;color:#262626"><span style="display:inline-block;transform:scaleX(1.01);transform-origin:left">Demostrasse</span></div>
<div class="cell" style="left:381.4px;top:369.23499999999996px;width:25.200000000000045px;height:18px;padding:0 3px 0 2.2px;text-align:left;color:#262626"><span style="">1</span></div>
<div class="cell" style="left:406.6px;top:369.23499999999996px;width:97.0px;height:18px;padding:0 3px 0 2.3px;text-align:right;color:#262626"><span style="display:inline-block;transform:scaleX(0.925);transform-origin:right">175</span></div>
<div class="cell" style="left:503.6px;top:369.23499999999996px;width:58.39999999999998px;height:18px;padding:0 3px 0 2.3px;text-align:right;color:#262626"><span style="">1</span></div>
<div class="cell" style="left:562.0px;top:369.23499999999996px;width:68.79999999999995px;height:18px;padding:0 3px 0 2.2px;text-align:left;color:#262626"><span style="display:inline-block;transform:scaleX(1.01);transform-origin:left">Demostadt</span></div>
<div class="cell" style="left:630.8px;top:369.23499999999996px;width:37.80000000000007px;height:18px;padding:0 3px 0 2.2px;text-align:left;color:#262626"><span style="display:inline-block;transform:scaleX(0.95);transform-origin:left">22222</span></div>
<div class="cell" style="left:668.6px;top:369.23499999999996px;width:46.89999999999998px;height:18px;padding:0 3px 0 2.2px;text-align:left;color:#262626"><span style="display:inline-block;transform:scaleX(1.04);transform-origin:left">Demo</span></div>
<div class="cell" style="left:717.6px;top:369.23499999999996px;width:56.19999999999993px;height:18px;padding:0 3px 0 2.3px;text-align:right;color:#262626"><span style="display:inline-block;transform:scaleX(0.925);transform-origin:right">1942</span></div>
<div class="cell" style="left:775.6px;top:369.23499999999996px;width:38.5px;height:18px;padding:0 3px 0 2.2px;text-align:left;color:#262626"><span style="display:inline-block;transform:scaleX(1.09);transform-origin:left">aktiv</span></div>
<div class="cell" style="left:814.1px;top:369.23499999999996px;width:80.10000000000002px;height:18px;padding:0 3px 0 2.2px;text-align:left;color:#262626"><span style="display:inline-block;transform:scaleX(1.094);transform-origin:left">Hauptleitung</span></div>
<div class="cell" style="left:896.6px;top:369.23499999999996px;width:56.89999999999998px;height:18px;padding:0 3px 0 2.3px;text-align:right;color:#262626"><span style="display:inline-block;transform:scaleX(0.925);transform-origin:right">79</span></div>
<div class="cell" style="left:953.5px;top:369.23499999999996px;width:57.10000000000002px;height:18px;padding:0 3px 0 2.3px;text-align:right;color:#262626"><span style="">3</span></div>
<div class="cell" style="left:1013.0px;top:369.23499999999996px;width:62.59999999999991px;height:18px;padding:0 3px 0 2.3px;text-align:right;color:#262626"><span style="display:inline-block;transform:scaleX(0.925);transform-origin:right">14601,725</span></div>
<div class="cell" style="left:1075.6px;top:369.23499999999996px;width:60.600000000000136px;height:18px;padding:0 3px 0 2.3px;text-align:right;color:#262626"><span style="display:inline-block;transform:scaleX(0.925);transform-origin:right">2021</span></div>
<div class="cell" style="left:23.0px;top:387.545px;width:57.599999999999994px;height:18px;display:flex;justify-content:center;font-weight:bold;color:#262626"><span style="">9</span></div>
<div class="cell" style="left:82.4px;top:387.545px;width:103.19999999999999px;height:18px;padding:0 3px 0 2.2px;text-align:left;color:#262626"><span style="display:inline-block;transform:scaleX(0.87);transform-origin:left">ST2</span></div>
<div class="cell" style="left:185.6px;top:387.545px;width:54.0px;height:18px;padding:0 3px 0 2.2px;text-align:left;color:#262626"><span style="display:inline-block;transform:scaleX(0.87);transform-origin:left">ST2</span></div>
<div class="cell" style="left:239.6px;top:387.545px;width:61.00000000000003px;height:18px;padding:0 3px 0 2.3px;text-align:right;color:#262626"><span style="display:inline-block;transform:scaleX(0.925);transform-origin:right">25,591</span></div>
<div class="cell" style="left:302.8px;top:387.545px;width:78.59999999999997px;height:18px;padding:0 3px 0 2.2px;text-align:left;color:#262626"><span style="display:inline-block;transform:scaleX(1.01);transform-origin:left">Demostrasse</span></div>
<div class="cell" style="left:381.4px;top:387.545px;width:25.200000000000045px;height:18px;padding:0 3px 0 2.2px;text-align:left;color:#262626"><span style="">1</span></div>
<div class="cell" style="left:406.6px;top:387.545px;width:97.0px;height:18px;padding:0 3px 0 2.3px;text-align:right;color:#262626"><span style="display:inline-block;transform:scaleX(0.925);transform-origin:right">175</span></div>
<div class="cell" style="left:503.6px;top:387.545px;width:58.39999999999998px;height:18px;padding:0 3px 0 2.3px;text-align:right;color:#262626"><span style="">1</span></div>
<div class="cell" style="left:562.0px;top:387.545px;width:68.79999999999995px;height:18px;padding:0 3px 0 2.2px;text-align:left;color:#262626"><span style="display:inline-block;transform:scaleX(1.01);transform-origin:left">Demostadt</span></div>
<div class="cell" style="left:630.8px;top:387.545px;width:37.80000000000007px;height:18px;padding:0 3px 0 2.2px;text-align:left;color:#262626"><span style="display:inline-block;transform:scaleX(0.95);transform-origin:left">22222</span></div>
<div class="cell" style="left:668.6px;top:387.545px;width:46.89999999999998px;height:18px;padding:0 3px 0 2.2px;text-align:left;color:#262626"><span style="display:inline-block;transform:scaleX(1.04);transform-origin:left">Demo</span></div>
<div class="cell" style="left:717.6px;top:387.545px;width:56.19999999999993px;height:18px;padding:0 3px 0 2.3px;text-align:right;color:#262626"><span style="display:inline-block;transform:scaleX(0.925);transform-origin:right">1942</span></div>
<div class="cell" style="left:775.6px;top:387.545px;width:38.5px;height:18px;padding:0 3px 0 2.2px;text-align:left;color:#262626"><span style="display:inline-block;transform:scaleX(1.09);transform-origin:left">aktiv</span></div>
<div class="cell" style="left:814.1px;top:387.545px;width:80.10000000000002px;height:18px;padding:0 3px 0 2.2px;text-align:left;color:#262626"><span style="display:inline-block;transform:scaleX(1.094);transform-origin:left">Hauptleitung</span></div>
<div class="cell" style="left:896.6px;top:387.545px;width:56.89999999999998px;height:18px;padding:0 3px 0 2.3px;text-align:right;color:#262626"><span style="display:inline-block;transform:scaleX(0.925);transform-origin:right">79</span></div>
<div class="cell" style="left:953.5px;top:387.545px;width:57.10000000000002px;height:18px;padding:0 3px 0 2.3px;text-align:right;color:#262626"><span style="">3</span></div>
<div class="cell" style="left:1013.0px;top:387.545px;width:62.59999999999991px;height:18px;padding:0 3px 0 2.3px;text-align:right;color:#262626"><span style="display:inline-block;transform:scaleX(0.925);transform-origin:right">10876,175</span></div>
<div class="cell" style="left:1075.6px;top:387.545px;width:60.600000000000136px;height:18px;padding:0 3px 0 2.3px;text-align:right;color:#262626"><span style="display:inline-block;transform:scaleX(0.925);transform-origin:right">2021</span></div>
<div class="cell" style="left:23.0px;top:405.85499999999996px;width:57.599999999999994px;height:18px;display:flex;justify-content:center;font-weight:bold;color:#262626"><span style="">10</span></div>
<div class="cell" style="left:82.4px;top:405.85499999999996px;width:103.19999999999999px;height:18px;padding:0 3px 0 2.2px;text-align:left;color:#262626"><span style="display:inline-block;transform:scaleX(0.87);transform-origin:left">ST2</span></div>
<div class="cell" style="left:185.6px;top:405.85499999999996px;width:54.0px;height:18px;padding:0 3px 0 2.2px;text-align:left;color:#262626"><span style="display:inline-block;transform:scaleX(0.87);transform-origin:left">ST2</span></div>
<div class="cell" style="left:239.6px;top:405.85499999999996px;width:61.00000000000003px;height:18px;padding:0 3px 0 2.3px;text-align:right;color:#262626"><span style="display:inline-block;transform:scaleX(0.925);transform-origin:right">23,393</span></div>
<div class="cell" style="left:302.8px;top:405.85499999999996px;width:78.59999999999997px;height:18px;padding:0 3px 0 2.2px;text-align:left;color:#262626"><span style="display:inline-block;transform:scaleX(1.01);transform-origin:left">Demostrasse</span></div>
<div class="cell" style="left:381.4px;top:405.85499999999996px;width:25.200000000000045px;height:18px;padding:0 3px 0 2.2px;text-align:left;color:#262626"><span style="">1</span></div>
<div class="cell" style="left:406.6px;top:405.85499999999996px;width:97.0px;height:18px;padding:0 3px 0 2.3px;text-align:right;color:#262626"><span style="display:inline-block;transform:scaleX(0.925);transform-origin:right">175</span></div>
<div class="cell" style="left:503.6px;top:405.85499999999996px;width:58.39999999999998px;height:18px;padding:0 3px 0 2.3px;text-align:right;color:#262626"><span style="">1</span></div>
<div class="cell" style="left:562.0px;top:405.85499999999996px;width:68.79999999999995px;height:18px;padding:0 3px 0 2.2px;text-align:left;color:#262626"><span style="display:inline-block;transform:scaleX(1.01);transform-origin:left">Demostadt</span></div>
<div class="cell" style="left:630.8px;top:405.85499999999996px;width:37.80000000000007px;height:18px;padding:0 3px 0 2.2px;text-align:left;color:#262626"><span style="display:inline-block;transform:scaleX(0.95);transform-origin:left">22222</span></div>
<div class="cell" style="left:668.6px;top:405.85499999999996px;width:46.89999999999998px;height:18px;padding:0 3px 0 2.2px;text-align:left;color:#262626"><span style="display:inline-block;transform:scaleX(1.04);transform-origin:left">Demo</span></div>
<div class="cell" style="left:717.6px;top:405.85499999999996px;width:56.19999999999993px;height:18px;padding:0 3px 0 2.3px;text-align:right;color:#262626"><span style="display:inline-block;transform:scaleX(0.925);transform-origin:right">1942</span></div>
<div class="cell" style="left:775.6px;top:405.85499999999996px;width:38.5px;height:18px;padding:0 3px 0 2.2px;text-align:left;color:#262626"><span style="display:inline-block;transform:scaleX(1.09);transform-origin:left">aktiv</span></div>
<div class="cell" style="left:814.1px;top:405.85499999999996px;width:80.10000000000002px;height:18px;padding:0 3px 0 2.2px;text-align:left;color:#262626"><span style="display:inline-block;transform:scaleX(1.094);transform-origin:left">Hauptleitung</span></div>
<div class="cell" style="left:896.6px;top:405.85499999999996px;width:56.89999999999998px;height:18px;padding:0 3px 0 2.3px;text-align:right;color:#262626"><span style="display:inline-block;transform:scaleX(0.925);transform-origin:right">79</span></div>
<div class="cell" style="left:953.5px;top:405.85499999999996px;width:57.10000000000002px;height:18px;padding:0 3px 0 2.3px;text-align:right;color:#262626"><span style="">3</span></div>
<div class="cell" style="left:1013.0px;top:405.85499999999996px;width:62.59999999999991px;height:18px;padding:0 3px 0 2.3px;text-align:right;color:#262626"><span style="display:inline-block;transform:scaleX(0.925);transform-origin:right">9942,025</span></div>
<div class="cell" style="left:1075.6px;top:405.85499999999996px;width:60.600000000000136px;height:18px;padding:0 3px 0 2.3px;text-align:right;color:#262626"><span style="display:inline-block;transform:scaleX(0.925);transform-origin:right">2021</span></div>
<div class="cell" style="left:23.0px;top:424.165px;width:57.599999999999994px;height:18px;display:flex;justify-content:center;font-weight:bold;color:#262626"><span style="">11</span></div>
<div class="cell" style="left:82.4px;top:424.165px;width:103.19999999999999px;height:18px;padding:0 3px 0 2.2px;text-align:left;color:#262626"><span style="display:inline-block;transform:scaleX(0.87);transform-origin:left">ST2</span></div>
<div class="cell" style="left:185.6px;top:424.165px;width:54.0px;height:18px;padding:0 3px 0 2.2px;text-align:left;color:#262626"><span style="display:inline-block;transform:scaleX(0.87);transform-origin:left">ST2</span></div>
<div class="cell" style="left:239.6px;top:424.165px;width:61.00000000000003px;height:18px;padding:0 3px 0 2.3px;text-align:right;color:#262626"><span style="display:inline-block;transform:scaleX(0.925);transform-origin:right">22,225</span></div>
<div class="cell" style="left:302.8px;top:424.165px;width:78.59999999999997px;height:18px;padding:0 3px 0 2.2px;text-align:left;color:#262626"><span style="display:inline-block;transform:scaleX(1.01);transform-origin:left">Demostrasse</span></div>
<div class="cell" style="left:381.4px;top:424.165px;width:25.200000000000045px;height:18px;padding:0 3px 0 2.2px;text-align:left;color:#262626"><span style="">1</span></div>
<div class="cell" style="left:406.6px;top:424.165px;width:97.0px;height:18px;padding:0 3px 0 2.3px;text-align:right;color:#262626"><span style="display:inline-block;transform:scaleX(0.925);transform-origin:right">175</span></div>
<div class="cell" style="left:503.6px;top:424.165px;width:58.39999999999998px;height:18px;padding:0 3px 0 2.3px;text-align:right;color:#262626"><span style="">1</span></div>
<div class="cell" style="left:562.0px;top:424.165px;width:68.79999999999995px;height:18px;padding:0 3px 0 2.2px;text-align:left;color:#262626"><span style="display:inline-block;transform:scaleX(1.01);transform-origin:left">Demostadt</span></div>
<div class="cell" style="left:630.8px;top:424.165px;width:37.80000000000007px;height:18px;padding:0 3px 0 2.2px;text-align:left;color:#262626"><span style="display:inline-block;transform:scaleX(0.95);transform-origin:left">22222</span></div>
<div class="cell" style="left:668.6px;top:424.165px;width:46.89999999999998px;height:18px;padding:0 3px 0 2.2px;text-align:left;color:#262626"><span style="display:inline-block;transform:scaleX(1.04);transform-origin:left">Demo</span></div>
<div class="cell" style="left:717.6px;top:424.165px;width:56.19999999999993px;height:18px;padding:0 3px 0 2.3px;text-align:right;color:#262626"><span style="display:inline-block;transform:scaleX(0.925);transform-origin:right">1942</span></div>
<div class="cell" style="left:775.6px;top:424.165px;width:38.5px;height:18px;padding:0 3px 0 2.2px;text-align:left;color:#262626"><span style="display:inline-block;transform:scaleX(1.09);transform-origin:left">aktiv</span></div>
<div class="cell" style="left:814.1px;top:424.165px;width:80.10000000000002px;height:18px;padding:0 3px 0 2.2px;text-align:left;color:#262626"><span style="display:inline-block;transform:scaleX(1.094);transform-origin:left">Hauptleitung</span></div>
<div class="cell" style="left:896.6px;top:424.165px;width:56.89999999999998px;height:18px;padding:0 3px 0 2.3px;text-align:right;color:#262626"><span style="display:inline-block;transform:scaleX(0.925);transform-origin:right">79</span></div>
<div class="cell" style="left:953.5px;top:424.165px;width:57.10000000000002px;height:18px;padding:0 3px 0 2.3px;text-align:right;color:#262626"><span style="">3</span></div>
<div class="cell" style="left:1013.0px;top:424.165px;width:62.59999999999991px;height:18px;padding:0 3px 0 2.3px;text-align:right;color:#262626"><span style="display:inline-block;transform:scaleX(0.925);transform-origin:right">9445,625</span></div>
<div class="cell" style="left:1075.6px;top:424.165px;width:60.600000000000136px;height:18px;padding:0 3px 0 2.3px;text-align:right;color:#262626"><span style="display:inline-block;transform:scaleX(0.925);transform-origin:right">2021</span></div>
<div class="cell" style="left:23.0px;top:442.47499999999997px;width:57.599999999999994px;height:18px;display:flex;justify-content:center;font-weight:bold;color:#262626"><span style="">12</span></div>
<div class="cell" style="left:82.4px;top:442.47499999999997px;width:103.19999999999999px;height:18px;padding:0 3px 0 2.2px;text-align:left;color:#262626"><span style="display:inline-block;transform:scaleX(0.87);transform-origin:left">ST2</span></div>
<div class="cell" style="left:185.6px;top:442.47499999999997px;width:54.0px;height:18px;padding:0 3px 0 2.2px;text-align:left;color:#262626"><span style="display:inline-block;transform:scaleX(0.87);transform-origin:left">ST2</span></div>
<div class="cell" style="left:239.6px;top:442.47499999999997px;width:61.00000000000003px;height:18px;padding:0 3px 0 2.3px;text-align:right;color:#262626"><span style="display:inline-block;transform:scaleX(0.925);transform-origin:right">14,416</span></div>
<div class="cell" style="left:302.8px;top:442.47499999999997px;width:78.59999999999997px;height:18px;padding:0 3px 0 2.2px;text-align:left;color:#262626"><span style="display:inline-block;transform:scaleX(1.01);transform-origin:left">Demostrasse</span></div>
<div class="cell" style="left:381.4px;top:442.47499999999997px;width:25.200000000000045px;height:18px;padding:0 3px 0 2.2px;text-align:left;color:#262626"><span style="">1</span></div>
<div class="cell" style="left:406.6px;top:442.47499999999997px;width:97.0px;height:18px;padding:0 3px 0 2.3px;text-align:right;color:#262626"><span style="display:inline-block;transform:scaleX(0.925);transform-origin:right">175</span></div>
<div class="cell" style="left:503.6px;top:442.47499999999997px;width:58.39999999999998px;height:18px;padding:0 3px 0 2.3px;text-align:right;color:#262626"><span style="">1</span></div>
<div class="cell" style="left:562.0px;top:442.47499999999997px;width:68.79999999999995px;height:18px;padding:0 3px 0 2.2px;text-align:left;color:#262626"><span style="display:inline-block;transform:scaleX(1.01);transform-origin:left">Demostadt</span></div>
<div class="cell" style="left:630.8px;top:442.47499999999997px;width:37.80000000000007px;height:18px;padding:0 3px 0 2.2px;text-align:left;color:#262626"><span style="display:inline-block;transform:scaleX(0.95);transform-origin:left">22222</span></div>
<div class="cell" style="left:668.6px;top:442.47499999999997px;width:46.89999999999998px;height:18px;padding:0 3px 0 2.2px;text-align:left;color:#262626"><span style="display:inline-block;transform:scaleX(1.04);transform-origin:left">Demo</span></div>
<div class="cell" style="left:717.6px;top:442.47499999999997px;width:56.19999999999993px;height:18px;padding:0 3px 0 2.3px;text-align:right;color:#262626"><span style="display:inline-block;transform:scaleX(0.925);transform-origin:right">1942</span></div>
<div class="cell" style="left:775.6px;top:442.47499999999997px;width:38.5px;height:18px;padding:0 3px 0 2.2px;text-align:left;color:#262626"><span style="display:inline-block;transform:scaleX(1.09);transform-origin:left">aktiv</span></div>
<div class="cell" style="left:814.1px;top:442.47499999999997px;width:80.10000000000002px;height:18px;padding:0 3px 0 2.2px;text-align:left;color:#262626"><span style="display:inline-block;transform:scaleX(1.094);transform-origin:left">Hauptleitung</span></div>
<div class="cell" style="left:896.6px;top:442.47499999999997px;width:56.89999999999998px;height:18px;padding:0 3px 0 2.3px;text-align:right;color:#262626"><span style="display:inline-block;transform:scaleX(0.925);transform-origin:right">79</span></div>
<div class="cell" style="left:953.5px;top:442.47499999999997px;width:57.10000000000002px;height:18px;padding:0 3px 0 2.3px;text-align:right;color:#262626"><span style="">3</span></div>
<div class="cell" style="left:1013.0px;top:442.47499999999997px;width:62.59999999999991px;height:18px;padding:0 3px 0 2.3px;text-align:right;color:#262626"><span style="display:inline-block;transform:scaleX(0.925);transform-origin:right">6126,8</span></div>
<div class="cell" style="left:1075.6px;top:442.47499999999997px;width:60.600000000000136px;height:18px;padding:0 3px 0 2.3px;text-align:right;color:#262626"><span style="display:inline-block;transform:scaleX(0.925);transform-origin:right">2022</span></div>
<div class="cell" style="left:23.0px;top:460.78499999999997px;width:57.599999999999994px;height:18px;display:flex;justify-content:center;font-weight:bold;color:#262626"><span style="">13</span></div>
<div class="cell" style="left:82.4px;top:460.78499999999997px;width:103.19999999999999px;height:18px;padding:0 3px 0 2.2px;text-align:left;color:#262626"><span style="display:inline-block;transform:scaleX(0.87);transform-origin:left">ST2</span></div>
<div class="cell" style="left:185.6px;top:460.78499999999997px;width:54.0px;height:18px;padding:0 3px 0 2.2px;text-align:left;color:#262626"><span style="display:inline-block;transform:scaleX(0.87);transform-origin:left">ST2</span></div>
<div class="cell" style="left:239.6px;top:460.78499999999997px;width:61.00000000000003px;height:18px;padding:0 3px 0 2.3px;text-align:right;color:#262626"><span style="display:inline-block;transform:scaleX(0.925);transform-origin:right">12,101</span></div>
<div class="cell" style="left:302.8px;top:460.78499999999997px;width:78.59999999999997px;height:18px;padding:0 3px 0 2.2px;text-align:left;color:#262626"><span style="display:inline-block;transform:scaleX(1.01);transform-origin:left">Demostrasse</span></div>
<div class="cell" style="left:381.4px;top:460.78499999999997px;width:25.200000000000045px;height:18px;padding:0 3px 0 2.2px;text-align:left;color:#262626"><span style="">1</span></div>
<div class="cell" style="left:406.6px;top:460.78499999999997px;width:97.0px;height:18px;padding:0 3px 0 2.3px;text-align:right;color:#262626"><span style="display:inline-block;transform:scaleX(0.925);transform-origin:right">175</span></div>
<div class="cell" style="left:503.6px;top:460.78499999999997px;width:58.39999999999998px;height:18px;padding:0 3px 0 2.3px;text-align:right;color:#262626"><span style="">1</span></div>
<div class="cell" style="left:562.0px;top:460.78499999999997px;width:68.79999999999995px;height:18px;padding:0 3px 0 2.2px;text-align:left;color:#262626"><span style="display:inline-block;transform:scaleX(1.01);transform-origin:left">Demostadt</span></div>
<div class="cell" style="left:630.8px;top:460.78499999999997px;width:37.80000000000007px;height:18px;padding:0 3px 0 2.2px;text-align:left;color:#262626"><span style="display:inline-block;transform:scaleX(0.95);transform-origin:left">22222</span></div>
<div class="cell" style="left:668.6px;top:460.78499999999997px;width:46.89999999999998px;height:18px;padding:0 3px 0 2.2px;text-align:left;color:#262626"><span style="display:inline-block;transform:scaleX(1.04);transform-origin:left">Demo</span></div>
<div class="cell" style="left:717.6px;top:460.78499999999997px;width:56.19999999999993px;height:18px;padding:0 3px 0 2.3px;text-align:right;color:#262626"><span style="display:inline-block;transform:scaleX(0.925);transform-origin:right">1942</span></div>
<div class="cell" style="left:775.6px;top:460.78499999999997px;width:38.5px;height:18px;padding:0 3px 0 2.2px;text-align:left;color:#262626"><span style="display:inline-block;transform:scaleX(1.09);transform-origin:left">aktiv</span></div>
<div class="cell" style="left:814.1px;top:460.78499999999997px;width:80.10000000000002px;height:18px;padding:0 3px 0 2.2px;text-align:left;color:#262626"><span style="display:inline-block;transform:scaleX(1.094);transform-origin:left">Hauptleitung</span></div>
<div class="cell" style="left:896.6px;top:460.78499999999997px;width:56.89999999999998px;height:18px;padding:0 3px 0 2.3px;text-align:right;color:#262626"><span style="display:inline-block;transform:scaleX(0.925);transform-origin:right">80</span></div>
<div class="cell" style="left:953.5px;top:460.78499999999997px;width:57.10000000000002px;height:18px;padding:0 3px 0 2.3px;text-align:right;color:#262626"><span style="">3</span></div>
<div class="cell" style="left:1013.0px;top:460.78499999999997px;width:62.59999999999991px;height:18px;padding:0 3px 0 2.3px;text-align:right;color:#262626"><span style="display:inline-block;transform:scaleX(0.925);transform-origin:right">5142,925</span></div>
<div class="cell" style="left:1075.6px;top:460.78499999999997px;width:60.600000000000136px;height:18px;padding:0 3px 0 2.3px;text-align:right;color:#262626"><span style="display:inline-block;transform:scaleX(0.925);transform-origin:right">2022</span></div>
<div class="cell" style="left:23.0px;top:479.09499999999997px;width:57.599999999999994px;height:18px;display:flex;justify-content:center;font-weight:bold;color:#262626"><span style="">14</span></div>
<div class="cell" style="left:82.4px;top:479.09499999999997px;width:103.19999999999999px;height:18px;padding:0 3px 0 2.2px;text-align:left;color:#262626"><span style="display:inline-block;transform:scaleX(0.87);transform-origin:left">ST2</span></div>
<div class="cell" style="left:185.6px;top:479.09499999999997px;width:54.0px;height:18px;padding:0 3px 0 2.2px;text-align:left;color:#262626"><span style="display:inline-block;transform:scaleX(0.87);transform-origin:left">ST2</span></div>
<div class="cell" style="left:239.6px;top:479.09499999999997px;width:61.00000000000003px;height:18px;padding:0 3px 0 2.3px;text-align:right;color:#262626"><span style="display:inline-block;transform:scaleX(0.925);transform-origin:right">9,778</span></div>
<div class="cell" style="left:302.8px;top:479.09499999999997px;width:78.59999999999997px;height:18px;padding:0 3px 0 2.2px;text-align:left;color:#262626"><span style="display:inline-block;transform:scaleX(1.01);transform-origin:left">Demostrasse</span></div>
<div class="cell" style="left:381.4px;top:479.09499999999997px;width:25.200000000000045px;height:18px;padding:0 3px 0 2.2px;text-align:left;color:#262626"><span style="">1</span></div>
<div class="cell" style="left:406.6px;top:479.09499999999997px;width:97.0px;height:18px;padding:0 3px 0 2.3px;text-align:right;color:#262626"><span style="display:inline-block;transform:scaleX(0.925);transform-origin:right">175</span></div>
<div class="cell" style="left:503.6px;top:479.09499999999997px;width:58.39999999999998px;height:18px;padding:0 3px 0 2.3px;text-align:right;color:#262626"><span style="">1</span></div>
<div class="cell" style="left:562.0px;top:479.09499999999997px;width:68.79999999999995px;height:18px;padding:0 3px 0 2.2px;text-align:left;color:#262626"><span style="display:inline-block;transform:scaleX(1.01);transform-origin:left">Demostadt</span></div>
<div class="cell" style="left:630.8px;top:479.09499999999997px;width:37.80000000000007px;height:18px;padding:0 3px 0 2.2px;text-align:left;color:#262626"><span style="display:inline-block;transform:scaleX(0.95);transform-origin:left">22222</span></div>
<div class="cell" style="left:668.6px;top:479.09499999999997px;width:46.89999999999998px;height:18px;padding:0 3px 0 2.2px;text-align:left;color:#262626"><span style="display:inline-block;transform:scaleX(1.04);transform-origin:left">Demo</span></div>
<div class="cell" style="left:717.6px;top:479.09499999999997px;width:56.19999999999993px;height:18px;padding:0 3px 0 2.3px;text-align:right;color:#262626"><span style="display:inline-block;transform:scaleX(0.925);transform-origin:right">1942</span></div>
<div class="cell" style="left:775.6px;top:479.09499999999997px;width:38.5px;height:18px;padding:0 3px 0 2.2px;text-align:left;color:#262626"><span style="display:inline-block;transform:scaleX(1.09);transform-origin:left">aktiv</span></div>
<div class="cell" style="left:814.1px;top:479.09499999999997px;width:80.10000000000002px;height:18px;padding:0 3px 0 2.2px;text-align:left;color:#262626"><span style="display:inline-block;transform:scaleX(1.094);transform-origin:left">Hauptleitung</span></div>
<div class="cell" style="left:896.6px;top:479.09499999999997px;width:56.89999999999998px;height:18px;padding:0 3px 0 2.3px;text-align:right;color:#262626"><span style="display:inline-block;transform:scaleX(0.925);transform-origin:right">80</span></div>
<div class="cell" style="left:953.5px;top:479.09499999999997px;width:57.10000000000002px;height:18px;padding:0 3px 0 2.3px;text-align:right;color:#262626"><span style="">3</span></div>
<div class="cell" style="left:1013.0px;top:479.09499999999997px;width:62.59999999999991px;height:18px;padding:0 3px 0 2.3px;text-align:right;color:#262626"><span style="display:inline-block;transform:scaleX(0.925);transform-origin:right">4155,65</span></div>
<div class="cell" style="left:1075.6px;top:479.09499999999997px;width:60.600000000000136px;height:18px;padding:0 3px 0 2.3px;text-align:right;color:#262626"><span style="display:inline-block;transform:scaleX(0.925);transform-origin:right">2022</span></div>
<div class="cell" style="left:23.0px;top:497.405px;width:57.599999999999994px;height:18px;display:flex;justify-content:center;font-weight:bold;color:#262626"><span style="">15</span></div>
<div class="cell" style="left:82.4px;top:497.405px;width:103.19999999999999px;height:18px;padding:0 3px 0 2.2px;text-align:left;color:#262626"><span style="display:inline-block;transform:scaleX(0.87);transform-origin:left">ST2</span></div>
<div class="cell" style="left:185.6px;top:497.405px;width:54.0px;height:18px;padding:0 3px 0 2.2px;text-align:left;color:#262626"><span style="display:inline-block;transform:scaleX(0.87);transform-origin:left">ST2</span></div>
<div class="cell" style="left:239.6px;top:497.405px;width:61.00000000000003px;height:18px;padding:0 3px 0 2.3px;text-align:right;color:#262626"><span style="display:inline-block;transform:scaleX(0.925);transform-origin:right">9,039</span></div>
<div class="cell" style="left:302.8px;top:497.405px;width:78.59999999999997px;height:18px;padding:0 3px 0 2.2px;text-align:left;color:#262626"><span style="display:inline-block;transform:scaleX(1.01);transform-origin:left">Demostrasse</span></div>
<div class="cell" style="left:381.4px;top:497.405px;width:25.200000000000045px;height:18px;padding:0 3px 0 2.2px;text-align:left;color:#262626"><span style="">1</span></div>
<div class="cell" style="left:406.6px;top:497.405px;width:97.0px;height:18px;padding:0 3px 0 2.3px;text-align:right;color:#262626"><span style="display:inline-block;transform:scaleX(0.925);transform-origin:right">175</span></div>
<div class="cell" style="left:503.6px;top:497.405px;width:58.39999999999998px;height:18px;padding:0 3px 0 2.3px;text-align:right;color:#262626"><span style="">1</span></div>
<div class="cell" style="left:562.0px;top:497.405px;width:68.79999999999995px;height:18px;padding:0 3px 0 2.2px;text-align:left;color:#262626"><span style="display:inline-block;transform:scaleX(1.01);transform-origin:left">Demostadt</span></div>
<div class="cell" style="left:630.8px;top:497.405px;width:37.80000000000007px;height:18px;padding:0 3px 0 2.2px;text-align:left;color:#262626"><span style="display:inline-block;transform:scaleX(0.95);transform-origin:left">22222</span></div>
<div class="cell" style="left:668.6px;top:497.405px;width:46.89999999999998px;height:18px;padding:0 3px 0 2.2px;text-align:left;color:#262626"><span style="display:inline-block;transform:scaleX(1.04);transform-origin:left">Demo</span></div>
<div class="cell" style="left:717.6px;top:497.405px;width:56.19999999999993px;height:18px;padding:0 3px 0 2.3px;text-align:right;color:#262626"><span style="display:inline-block;transform:scaleX(0.925);transform-origin:right">1942</span></div>
<div class="cell" style="left:775.6px;top:497.405px;width:38.5px;height:18px;padding:0 3px 0 2.2px;text-align:left;color:#262626"><span style="display:inline-block;transform:scaleX(1.09);transform-origin:left">aktiv</span></div>
<div class="cell" style="left:814.1px;top:497.405px;width:80.10000000000002px;height:18px;padding:0 3px 0 2.2px;text-align:left;color:#262626"><span style="display:inline-block;transform:scaleX(1.094);transform-origin:left">Hauptleitung</span></div>
<div class="cell" style="left:896.6px;top:497.405px;width:56.89999999999998px;height:18px;padding:0 3px 0 2.3px;text-align:right;color:#262626"><span style="display:inline-block;transform:scaleX(0.925);transform-origin:right">80</span></div>
<div class="cell" style="left:953.5px;top:497.405px;width:57.10000000000002px;height:18px;padding:0 3px 0 2.3px;text-align:right;color:#262626"><span style="">3</span></div>
<div class="cell" style="left:1013.0px;top:497.405px;width:62.59999999999991px;height:18px;padding:0 3px 0 2.3px;text-align:right;color:#262626"><span style="display:inline-block;transform:scaleX(0.925);transform-origin:right">3841,575</span></div>
<div class="cell" style="left:1075.6px;top:497.405px;width:60.600000000000136px;height:18px;padding:0 3px 0 2.3px;text-align:right;color:#262626"><span style="display:inline-block;transform:scaleX(0.925);transform-origin:right">2022</span></div>
<div class="cell" style="left:23.0px;top:515.7149999999999px;width:57.599999999999994px;height:18px;display:flex;justify-content:center;font-weight:bold;color:#262626"><span style="">16</span></div>
<div class="cell" style="left:82.4px;top:515.7149999999999px;width:103.19999999999999px;height:18px;padding:0 3px 0 2.2px;text-align:left;color:#262626"><span style="display:inline-block;transform:scaleX(0.87);transform-origin:left">ST2</span></div>
<div class="cell" style="left:185.6px;top:515.7149999999999px;width:54.0px;height:18px;padding:0 3px 0 2.2px;text-align:left;color:#262626"><span style="display:inline-block;transform:scaleX(0.87);transform-origin:left">ST2</span></div>
<div class="cell" style="left:239.6px;top:515.7149999999999px;width:61.00000000000003px;height:18px;padding:0 3px 0 2.3px;text-align:right;color:#262626"><span style="display:inline-block;transform:scaleX(0.925);transform-origin:right">5,024</span></div>
<div class="cell" style="left:302.8px;top:515.7149999999999px;width:78.59999999999997px;height:18px;padding:0 3px 0 2.2px;text-align:left;color:#262626"><span style="display:inline-block;transform:scaleX(1.01);transform-origin:left">Demostrasse</span></div>
<div class="cell" style="left:381.4px;top:515.7149999999999px;width:25.200000000000045px;height:18px;padding:0 3px 0 2.2px;text-align:left;color:#262626"><span style="">1</span></div>
<div class="cell" style="left:406.6px;top:515.7149999999999px;width:97.0px;height:18px;padding:0 3px 0 2.3px;text-align:right;color:#262626"><span style="display:inline-block;transform:scaleX(0.925);transform-origin:right">175</span></div>
<div class="cell" style="left:503.6px;top:515.7149999999999px;width:58.39999999999998px;height:18px;padding:0 3px 0 2.3px;text-align:right;color:#262626"><span style="">1</span></div>
<div class="cell" style="left:562.0px;top:515.7149999999999px;width:68.79999999999995px;height:18px;padding:0 3px 0 2.2px;text-align:left;color:#262626"><span style="display:inline-block;transform:scaleX(1.01);transform-origin:left">Demostadt</span></div>
<div class="cell" style="left:630.8px;top:515.7149999999999px;width:37.80000000000007px;height:18px;padding:0 3px 0 2.2px;text-align:left;color:#262626"><span style="display:inline-block;transform:scaleX(0.95);transform-origin:left">22222</span></div>
<div class="cell" style="left:668.6px;top:515.7149999999999px;width:46.89999999999998px;height:18px;padding:0 3px 0 2.2px;text-align:left;color:#262626"><span style="display:inline-block;transform:scaleX(1.04);transform-origin:left">Demo</span></div>
<div class="cell" style="left:717.6px;top:515.7149999999999px;width:56.19999999999993px;height:18px;padding:0 3px 0 2.3px;text-align:right;color:#262626"><span style="display:inline-block;transform:scaleX(0.925);transform-origin:right">1942</span></div>
<div class="cell" style="left:775.6px;top:515.7149999999999px;width:38.5px;height:18px;padding:0 3px 0 2.2px;text-align:left;color:#262626"><span style="display:inline-block;transform:scaleX(1.09);transform-origin:left">aktiv</span></div>
<div class="cell" style="left:814.1px;top:515.7149999999999px;width:80.10000000000002px;height:18px;padding:0 3px 0 2.2px;text-align:left;color:#262626"><span style="display:inline-block;transform:scaleX(1.094);transform-origin:left">Hauptleitung</span></div>
<div class="cell" style="left:896.6px;top:515.7149999999999px;width:56.89999999999998px;height:18px;padding:0 3px 0 2.3px;text-align:right;color:#262626"><span style="display:inline-block;transform:scaleX(0.925);transform-origin:right">80</span></div>
<div class="cell" style="left:953.5px;top:515.7149999999999px;width:57.10000000000002px;height:18px;padding:0 3px 0 2.3px;text-align:right;color:#262626"><span style="">3</span></div>
<div class="cell" style="left:1013.0px;top:515.7149999999999px;width:62.59999999999991px;height:18px;padding:0 3px 0 2.3px;text-align:right;color:#262626"><span style="display:inline-block;transform:scaleX(0.925);transform-origin:right">2135,2</span></div>
<div class="cell" style="left:1075.6px;top:515.7149999999999px;width:60.600000000000136px;height:18px;padding:0 3px 0 2.3px;text-align:right;color:#262626"><span style="display:inline-block;transform:scaleX(0.925);transform-origin:right">2022</span></div>
<div class="cell" style="left:23.0px;top:534.0249999999999px;width:57.599999999999994px;height:18px;display:flex;justify-content:center;font-weight:bold;color:#262626"><span style="">17</span></div>
<div class="cell" style="left:82.4px;top:534.0249999999999px;width:103.19999999999999px;height:18px;padding:0 3px 0 2.2px;text-align:left;color:#262626"><span style="display:inline-block;transform:scaleX(0.87);transform-origin:left">ST2</span></div>
<div class="cell" style="left:185.6px;top:534.0249999999999px;width:54.0px;height:18px;padding:0 3px 0 2.2px;text-align:left;color:#262626"><span style="display:inline-block;transform:scaleX(0.87);transform-origin:left">ST2</span></div>
<div class="cell" style="left:239.6px;top:534.0249999999999px;width:61.00000000000003px;height:18px;padding:0 3px 0 2.3px;text-align:right;color:#262626"><span style="display:inline-block;transform:scaleX(0.925);transform-origin:right">5,024</span></div>
<div class="cell" style="left:302.8px;top:534.0249999999999px;width:78.59999999999997px;height:18px;padding:0 3px 0 2.2px;text-align:left;color:#262626"><span style="display:inline-block;transform:scaleX(1.01);transform-origin:left">Demostrasse</span></div>
<div class="cell" style="left:381.4px;top:534.0249999999999px;width:25.200000000000045px;height:18px;padding:0 3px 0 2.2px;text-align:left;color:#262626"><span style="">1</span></div>
<div class="cell" style="left:406.6px;top:534.0249999999999px;width:97.0px;height:18px;padding:0 3px 0 2.3px;text-align:right;color:#262626"><span style="display:inline-block;transform:scaleX(0.925);transform-origin:right">175</span></div>
<div class="cell" style="left:503.6px;top:534.0249999999999px;width:58.39999999999998px;height:18px;padding:0 3px 0 2.3px;text-align:right;color:#262626"><span style="">1</span></div>
<div class="cell" style="left:562.0px;top:534.0249999999999px;width:68.79999999999995px;height:18px;padding:0 3px 0 2.2px;text-align:left;color:#262626"><span style="display:inline-block;transform:scaleX(1.01);transform-origin:left">Demostadt</span></div>
<div class="cell" style="left:630.8px;top:534.0249999999999px;width:37.80000000000007px;height:18px;padding:0 3px 0 2.2px;text-align:left;color:#262626"><span style="display:inline-block;transform:scaleX(0.95);transform-origin:left">22222</span></div>
<div class="cell" style="left:668.6px;top:534.0249999999999px;width:46.89999999999998px;height:18px;padding:0 3px 0 2.2px;text-align:left;color:#262626"><span style="display:inline-block;transform:scaleX(1.04);transform-origin:left">Demo</span></div>
<div class="cell" style="left:717.6px;top:534.0249999999999px;width:56.19999999999993px;height:18px;padding:0 3px 0 2.3px;text-align:right;color:#262626"><span style="display:inline-block;transform:scaleX(0.925);transform-origin:right">1942</span></div>
<div class="cell" style="left:775.6px;top:534.0249999999999px;width:38.5px;height:18px;padding:0 3px 0 2.2px;text-align:left;color:#262626"><span style="display:inline-block;transform:scaleX(1.09);transform-origin:left">aktiv</span></div>
<div class="cell" style="left:814.1px;top:534.0249999999999px;width:80.10000000000002px;height:18px;padding:0 3px 0 2.2px;text-align:left;color:#262626"><span style="display:inline-block;transform:scaleX(1.094);transform-origin:left">Hauptleitung</span></div>
<div class="cell" style="left:896.6px;top:534.0249999999999px;width:56.89999999999998px;height:18px;padding:0 3px 0 2.3px;text-align:right;color:#262626"><span style="display:inline-block;transform:scaleX(0.925);transform-origin:right">80</span></div>
<div class="cell" style="left:953.5px;top:534.0249999999999px;width:57.10000000000002px;height:18px;padding:0 3px 0 2.3px;text-align:right;color:#262626"><span style="">3</span></div>
<div class="cell" style="left:1013.0px;top:534.0249999999999px;width:62.59999999999991px;height:18px;padding:0 3px 0 2.3px;text-align:right;color:#262626"><span style="display:inline-block;transform:scaleX(0.925);transform-origin:right">2135,2</span></div>
<div class="cell" style="left:1075.6px;top:534.0249999999999px;width:60.600000000000136px;height:18px;padding:0 3px 0 2.3px;text-align:right;color:#262626"><span style="display:inline-block;transform:scaleX(0.925);transform-origin:right">2022</span></div>
<div class="cell" style="left:23.0px;top:552.3349999999999px;width:57.599999999999994px;height:18px;display:flex;justify-content:center;font-weight:bold;color:#262626"><span style="">18</span></div>
<div class="cell" style="left:82.4px;top:552.3349999999999px;width:103.19999999999999px;height:18px;padding:0 3px 0 2.2px;text-align:left;color:#262626"><span style="display:inline-block;transform:scaleX(0.87);transform-origin:left">ST2</span></div>
<div class="cell" style="left:185.6px;top:552.3349999999999px;width:54.0px;height:18px;padding:0 3px 0 2.2px;text-align:left;color:#262626"><span style="display:inline-block;transform:scaleX(0.87);transform-origin:left">ST2</span></div>
<div class="cell" style="left:239.6px;top:552.3349999999999px;width:61.00000000000003px;height:18px;padding:0 3px 0 2.3px;text-align:right;color:#262626"><span style="display:inline-block;transform:scaleX(0.925);transform-origin:right">5,024</span></div>
<div class="cell" style="left:302.8px;top:552.3349999999999px;width:78.59999999999997px;height:18px;padding:0 3px 0 2.2px;text-align:left;color:#262626"><span style="display:inline-block;transform:scaleX(1.01);transform-origin:left">Demostrasse</span></div>
<div class="cell" style="left:381.4px;top:552.3349999999999px;width:25.200000000000045px;height:18px;padding:0 3px 0 2.2px;text-align:left;color:#262626"><span style="">1</span></div>
<div class="cell" style="left:406.6px;top:552.3349999999999px;width:97.0px;height:18px;padding:0 3px 0 2.3px;text-align:right;color:#262626"><span style="display:inline-block;transform:scaleX(0.925);transform-origin:right">175</span></div>
<div class="cell" style="left:503.6px;top:552.3349999999999px;width:58.39999999999998px;height:18px;padding:0 3px 0 2.3px;text-align:right;color:#262626"><span style="">1</span></div>
<div class="cell" style="left:562.0px;top:552.3349999999999px;width:68.79999999999995px;height:18px;padding:0 3px 0 2.2px;text-align:left;color:#262626"><span style="display:inline-block;transform:scaleX(1.01);transform-origin:left">Demostadt</span></div>
<div class="cell" style="left:630.8px;top:552.3349999999999px;width:37.80000000000007px;height:18px;padding:0 3px 0 2.2px;text-align:left;color:#262626"><span style="display:inline-block;transform:scaleX(0.95);transform-origin:left">22222</span></div>
<div class="cell" style="left:668.6px;top:552.3349999999999px;width:46.89999999999998px;height:18px;padding:0 3px 0 2.2px;text-align:left;color:#262626"><span style="display:inline-block;transform:scaleX(1.04);transform-origin:left">Demo</span></div>
<div class="cell" style="left:717.6px;top:552.3349999999999px;width:56.19999999999993px;height:18px;padding:0 3px 0 2.3px;text-align:right;color:#262626"><span style="display:inline-block;transform:scaleX(0.925);transform-origin:right">1942</span></div>
<div class="cell" style="left:775.6px;top:552.3349999999999px;width:38.5px;height:18px;padding:0 3px 0 2.2px;text-align:left;color:#262626"><span style="display:inline-block;transform:scaleX(1.09);transform-origin:left">aktiv</span></div>
<div class="cell" style="left:814.1px;top:552.3349999999999px;width:80.10000000000002px;height:18px;padding:0 3px 0 2.2px;text-align:left;color:#262626"><span style="display:inline-block;transform:scaleX(1.094);transform-origin:left">Hauptleitung</span></div>
<div class="cell" style="left:896.6px;top:552.3349999999999px;width:56.89999999999998px;height:18px;padding:0 3px 0 2.3px;text-align:right;color:#262626"><span style="display:inline-block;transform:scaleX(0.925);transform-origin:right">80</span></div>
<div class="cell" style="left:953.5px;top:552.3349999999999px;width:57.10000000000002px;height:18px;padding:0 3px 0 2.3px;text-align:right;color:#262626"><span style="">3</span></div>
<div class="cell" style="left:1013.0px;top:552.3349999999999px;width:62.59999999999991px;height:18px;padding:0 3px 0 2.3px;text-align:right;color:#262626"><span style="display:inline-block;transform:scaleX(0.925);transform-origin:right">2135,2</span></div>
<div class="cell" style="left:1075.6px;top:552.3349999999999px;width:60.600000000000136px;height:18px;padding:0 3px 0 2.3px;text-align:right;color:#262626"><span style="display:inline-block;transform:scaleX(0.925);transform-origin:right">2022</span></div>
</body></html>
